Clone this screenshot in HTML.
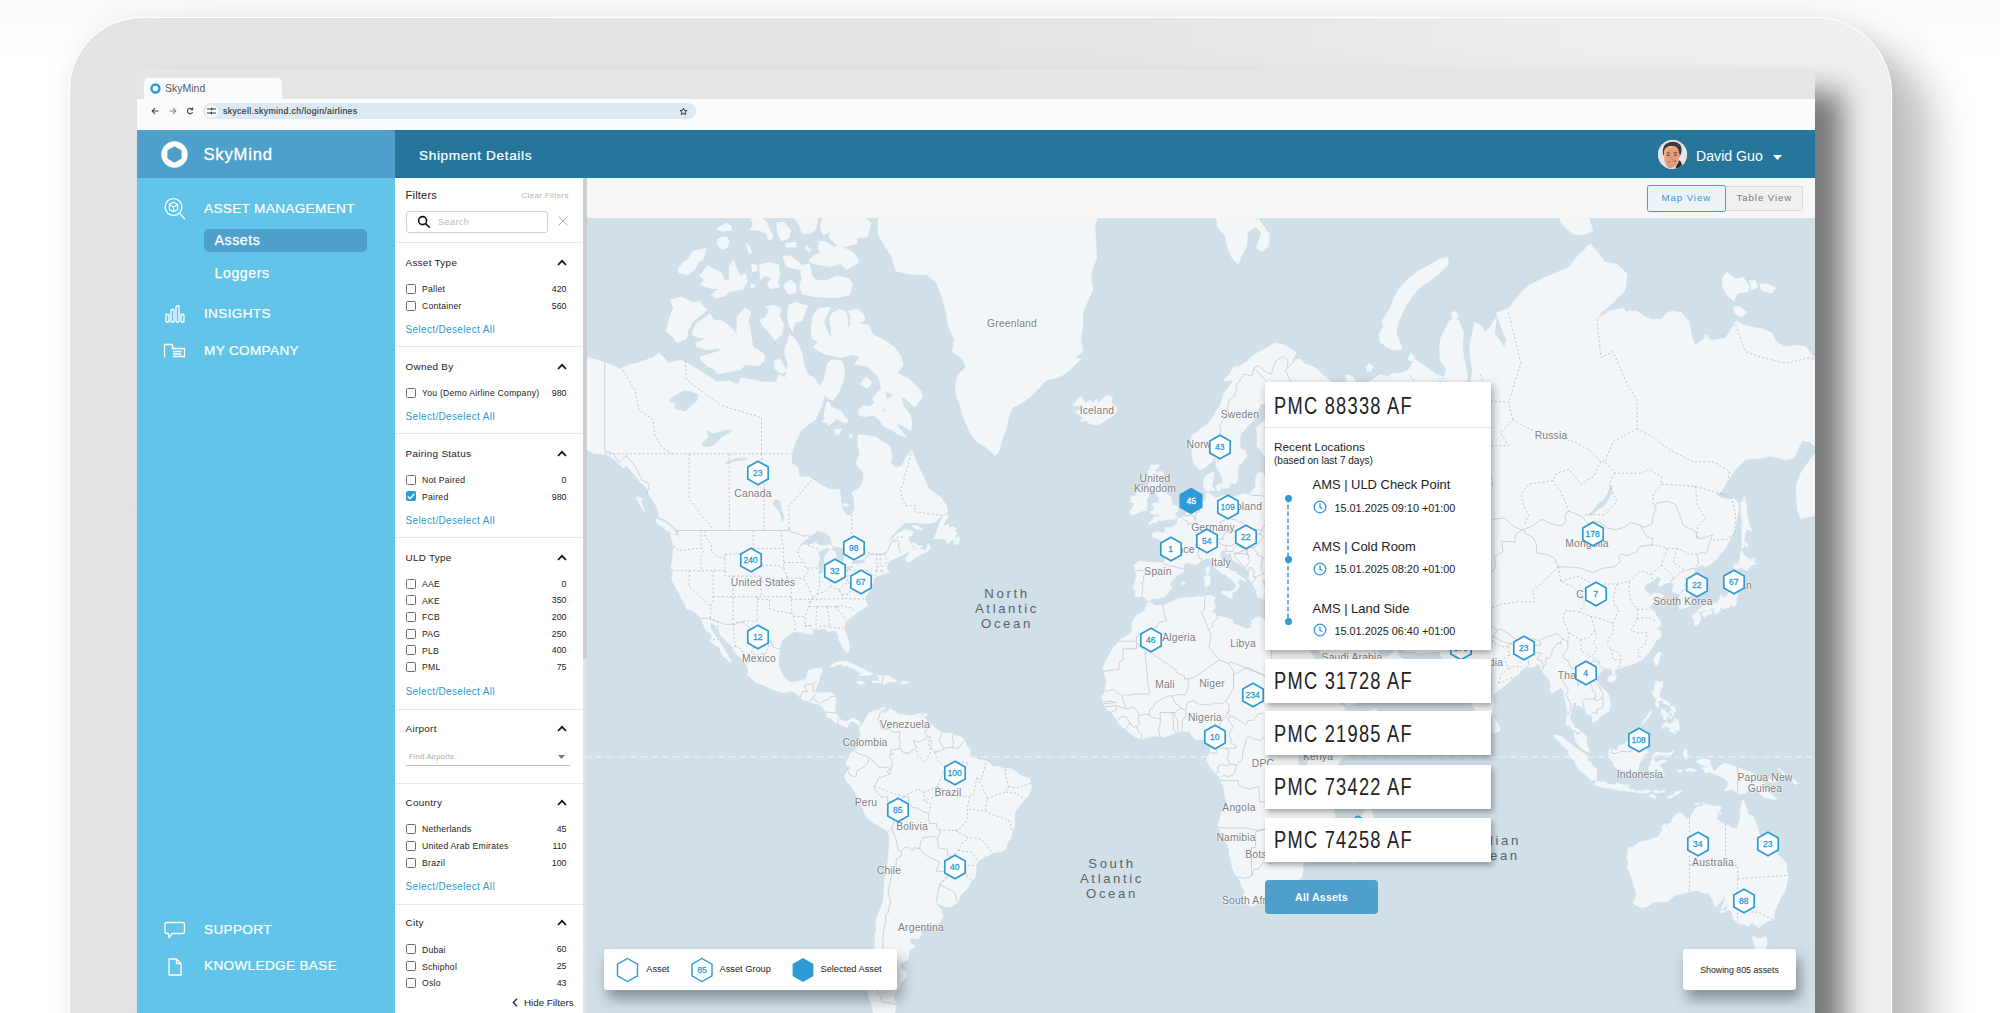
<!DOCTYPE html>
<html lang="en">
<head>
<meta charset="utf-8">
<title>SkyMind</title>
<style>
*{box-sizing:border-box;margin:0;padding:0}
html,body{width:2000px;height:1013px;overflow:hidden;background:#fff;font-family:"Liberation Sans",sans-serif;}
body{position:relative;background:linear-gradient(#fafafa 0,#fdfdfd 30px,#fff 60px)}
.abs{position:absolute}
#frame{position:absolute;left:70px;top:18px;width:1821px;height:1100px;border-radius:72px 76px 0 0;overflow:hidden;
 background:linear-gradient(90deg,#e3e3e3 0,#e4e4e4 55%,#eeeeee 85%,#efefef 100%);}
#frameshadow{position:absolute;left:70px;top:18px;width:1821px;height:1100px;border-radius:72px 76px 0 0;
 box-shadow:0 0 0 1.2px rgba(255,255,255,.95), 42px 30px 42px rgba(0,0,0,.24), 0 0 26px rgba(0,0,0,.08);}
#screen{position:absolute;left:67px;top:51px;width:1678px;height:1100px;background:#fff;
 box-shadow:27px 23px 27px rgba(0,0,0,.5);}
/* coordinates inside screen: subtract 137,69 */
#tabbar{position:absolute;left:0;top:0;width:1678px;height:30px;background:#e5e5e5}
#tab{position:absolute;left:7px;top:9px;width:138px;height:22px;background:#f9fbfd;border-radius:5px 5px 0 0}
#tab span{position:absolute;left:21px;top:4px;font-size:10.5px;color:#5a5a5a}
#toolbar{position:absolute;left:0;top:30px;width:1678px;height:31px;background:#f9fbfd}
#url{position:absolute;left:66px;top:4.3px;width:493px;height:16px;border-radius:8px;background:#dde9f2}
#url span{position:absolute;left:20px;top:2.5px;font-size:8.7px;color:#333;letter-spacing:.36px;-webkit-text-stroke:.15px #333}
#sidehead{position:absolute;left:0;top:61px;width:258px;height:48px;background:#4f9fcc}
#mainhead{position:absolute;left:258px;top:61px;width:1420px;height:48px;background:#26769b}
#sidebar{position:absolute;left:0;top:109px;width:258px;height:900px;background:#62c4e8}
#filters{position:absolute;left:258px;top:109px;width:188.6px;height:900px;background:#fff}
#maptb{position:absolute;left:448px;top:109px;width:1230px;height:40px;background:#f6f6f6}
#map{position:absolute;left:448px;top:149px;width:1230px;height:800px;background:#d1dfe8;overflow:hidden}
.w{color:#fff}
.nav{position:absolute;left:67px;font-size:13.6px;color:#fff;letter-spacing:.33px;white-space:nowrap;-webkit-text-stroke:.22px #fff}
.sub{position:absolute;left:77.5px;font-size:14.2px;color:#fff;letter-spacing:.55px;white-space:nowrap;-webkit-text-stroke:.25px #fff}
.fh{position:absolute;left:268.5px;font-size:9.9px;color:#222;letter-spacing:.3px;white-space:nowrap}
.fi{position:absolute;left:285px;font-size:8.65px;color:#222;letter-spacing:.25px;white-space:nowrap}
.fc{position:absolute;right:1248.5px;font-size:8.8px;color:#222;text-align:right;white-space:nowrap}
.cb{position:absolute;left:269px;width:10px;height:10px;border:1.2px solid #6b6b6b;border-radius:1.5px;background:#fff}
.sel{position:absolute;left:268.5px;font-size:10px;color:#2c9bd6;letter-spacing:.35px;white-space:nowrap}
.hr{position:absolute;left:258px;width:188px;height:1px;background:#e9e9e9}
.chev{position:absolute;left:420px;width:10px;height:7px}
.card{position:absolute;left:1128px;width:226px;background:#fff;box-shadow:2px 3px 6px rgba(0,0,0,.35)}
.ct{position:absolute;left:9px;font-size:24.5px;color:#222;white-space:nowrap;transform:scaleX(.745);transform-origin:0 50%;letter-spacing:1.7px}
.mk{position:absolute;width:28px;height:30px;margin:-15px 0 0 -14px}
.mk svg{position:absolute;left:0;top:0}
.mk span{position:absolute;left:0;top:10.2px;width:28px;text-align:center;font-size:8.5px;color:#2c9bd6;-webkit-text-stroke:.3px #2c9bd6}
.ml{position:absolute;font-size:10.3px;color:#7d7d7d;white-space:nowrap;transform:translate(-50%,-50%);letter-spacing:.2px;text-shadow:0 0 2px #fff,0 0 2px #fff}
.oc{position:absolute;font-size:13.2px;color:#5b6268;white-space:nowrap;transform:translate(-50%,-50%);letter-spacing:2.6px;text-align:center;line-height:15px}
</style>
</head>
<body>
<div id="frameshadow"></div>
<div id="frame">
<div id="screen">
 <div id="tabbar"><div id="tab">
  <svg class="abs" style="left:6px;top:5px" width="11" height="11" viewBox="0 0 11 11"><circle cx="5.5" cy="5.5" r="4" fill="#fff" stroke="#2a9bd8" stroke-width="2.4"/></svg>
  <span>SkyMind</span></div></div>
 <div id="toolbar">
  <svg class="abs" style="left:13px;top:7.3px" width="48" height="10" viewBox="0 0 48 10" fill="none" stroke="#444" stroke-width="1.1"><path d="M8.5 5H2.5M5 2.2L2.2 5L5 7.8"/><path d="M19.5 5h6M23 2.2L25.8 5L23 7.8" stroke="#888"/><path d="M42.2 3.2A2.7 2.7 0 1 0 42.6 6.2M42.6 1.6V3.6H40.6"/></svg>
  <div id="url"><div class="abs" style="left:1.5px;top:1.5px;width:13px;height:13px;border-radius:50%;background:#f9fbfd"></div><svg class="abs" style="left:4px;top:4px" width="9" height="8" viewBox="0 0 9 8" fill="none" stroke="#333" stroke-width="1.2"><path d="M0 2h3M6 2h3M0 6h3M6 6h3"/><circle cx="4.6" cy="2" r=".6"/><circle cx="4.4" cy="6" r=".6"/></svg>
  <span>skycell.skymind.ch/login/airlines</span>
  <svg class="abs" style="left:476px;top:3.5px" width="9" height="9" viewBox="0 0 24 24" fill="none" stroke="#333" stroke-width="2.6"><path d="M12 3l2.7 6 6.3.6-4.8 4.3 1.5 6.3L12 17l-5.7 3.2 1.5-6.3L3 9.600l6.300-.6z"/></svg>
  </div>
 </div>
 <div id="sidehead">
  <svg class="abs" style="left:24px;top:11px" width="27" height="27" viewBox="0 0 27 27"><circle cx="13.5" cy="13.500" r="13.200" fill="#fff"/><path d="M13.500 5.200L20.600 9.300V17.600L13.500 21.800L6.400 17.600V9.300Z" fill="#4f9fcc"/></svg>
  <div class="abs w" style="left:66.500px;top:14.500px;font-size:16.6px;letter-spacing:.8px;-webkit-text-stroke:.3px #fff">SkyMind</div>
 </div>
 <div id="mainhead">
  <div class="abs w" style="left:24px;top:17.500px;font-size:13.6px;letter-spacing:.65px;-webkit-text-stroke:.22px #fff">Shipment Details</div>
  <div class="abs" style="left:1263px;top:9.500px;width:29px;height:29px;border-radius:50%;overflow:hidden;background:#d9dde0">
   <svg width="29" height="29" viewBox="0 0 29 29"><rect width="29" height="29" fill="#e4e5e6"/><path d="M5 14Q3.500 4 12 2Q20 .8 23 6Q24.500 10 22.500 15L6 16Z" fill="#3b3b3d"/><path d="M6 12.500Q6.500 6.500 13 6Q20.500 5.500 21 12Q21.500 20 18.500 25Q15 29.500 10 27.500Q5.500 23 6 12.500Z" fill="#e39d7c"/><path d="M6 12.500Q6.500 6.500 13 6Q17 5.800 19 7.500Q13 7 10 9.500Q7.500 11.500 7.500 15Q6.500 20 8 24Q5.700 19 6 12.500Z" fill="#f0b190"/><path d="M18.800 25Q20.500 23 21 20L23 22L25 28L17 29Z" fill="#2c2d31"/><ellipse cx="21.300" cy="15.500" rx="1" ry="2" fill="#d88f70"/><path d="M8.500 13.300Q10.200 12.300 12 13.200M15.500 13Q17.300 12 19.200 13" stroke="#5a3b2e" stroke-width=".9" fill="none"/><path d="M9 15.300h2.500M16.200 15h2.500" stroke="#3a2a24" stroke-width="1.100"/><path d="M10.500 21.500Q14 24 17.800 21" stroke="#8a4a3a" stroke-width="1.200" fill="none"/><path d="M11.500 22.300Q14 23.500 16.800 22" stroke="#fff" stroke-width=".7" fill="none"/><path d="M13.200 15.500Q12.500 18.500 13.500 19.300L15 19.200" stroke="#c27f63" stroke-width=".7" fill="none"/></svg>
  </div>
  <div class="abs w" style="left:1301px;top:17.8px;font-size:14.15px">David Guo</div>
  <svg class="abs" style="left:1378px;top:25.300px" width="9" height="5" viewBox="0 0 9 5"><path d="M0 0h9L4.500 5z" fill="#fff"/></svg>
 </div>
 <div id="sidebar"><svg class="abs" style="left:26px;top:18px" width="24" height="26" viewBox="0 0 24 26" fill="none" stroke="#fff" stroke-width="1.3"><circle cx="10.5" cy="11" r="8.4"/><path d="M16.6 17.4L22 23.2"/><path d="M10.5 6.2L14.7 8.6V13.4L10.5 15.8L6.3 13.4V8.600ZM6.300 8.600L10.500 11L14.700 8.600M10.500 11V15.800" stroke-width="1.1" stroke-linejoin="round"/></svg>
<div class="nav" style="top:23px">ASSET MANAGEMENT</div>
<div class="abs" style="left:67px;top:50.500px;width:163px;height:23px;border-radius:5px;background:#4f9fcc"></div>
<div class="sub" style="top:53.500px">Assets</div>
<div class="sub" style="top:87px">Loggers</div>
<svg class="abs" style="left:27px;top:126px" width="22" height="20" viewBox="0 0 22 20" fill="none" stroke="#fff" stroke-width="1.300"><rect x="2" y="10.500" width="3" height="7.500" rx=".8"/><rect x="7" y="5.500" width="3" height="12.500" rx=".8"/><rect x="12" y="2" width="3" height="16" rx=".8"/><rect x="17" y="10.500" width="3" height="7.500" rx=".8"/></svg>
<div class="nav" style="top:127.500px">INSIGHTS</div>
<svg class="abs" style="left:26px;top:164px" width="24" height="18" viewBox="0 0 24 18" fill="none" stroke="#fff" stroke-width="1.300"><path d="M1.500 15.500V2.500H9.500V6.500H21.500V15.500M10 9.500H18.500M10 12H18.500M10 14.500H21.500"/></svg>
<div class="nav" style="top:164.500px">MY COMPANY</div>
<svg class="abs" style="left:26px;top:741.6px" width="24" height="20" viewBox="0 0 24 20" fill="none" stroke="#fff" stroke-width="1.300" stroke-linejoin="round"><path d="M4 2.500H19.500Q21.500 2.500 21.500 4.500V11.500Q21.500 13.500 19.500 13.500H9L6 17.500L5.500 13.500H4Q2 13.500 2 11.500V4.500Q2 2.500 4 2.500Z"/></svg>
<div class="nav" style="top:744px">SUPPORT</div>
<svg class="abs" style="left:30px;top:778.6px" width="16" height="20" viewBox="0 0 16 20" fill="none" stroke="#fff" stroke-width="1.300" stroke-linejoin="round"><path d="M2 2H9.500L14 6.500V18H2ZM9.500 2V6.500H14"/></svg>
<div class="nav" style="top:780px">KNOWLEDGE BASE</div></div>
 <div id="filters"></div>
 <div class="abs" style="left:268.500px;top:120px;font-size:11.1px;color:#222;letter-spacing:.2px">Filters</div>
<div class="abs" style="left:384.500px;top:121.5px;font-size:7.95px;color:#b5b5b5;letter-spacing:.35px;white-space:nowrap">Clear Filters</div>
<div class="abs" style="left:269px;top:142px;width:142px;height:22px;border:1px solid #cfcfcf;border-radius:3px"></div>
<svg class="abs" style="left:280px;top:146px" width="14" height="14" viewBox="0 0 14 14" fill="none" stroke="#111" stroke-width="1.600"><circle cx="5.600" cy="5.600" r="4"/><path d="M8.600 8.600L12.800 12.800"/></svg>
<div class="abs" style="left:301px;top:147.5px;font-size:9.3px;color:#bbb;letter-spacing:.3px">Search</div>
<svg class="abs" style="left:420.500px;top:147px" width="10" height="10" viewBox="0 0 10 10" stroke="#aaa" stroke-width="1"><path d="M.5.500L9.500 9.500M9.500.500L.500 9.500"/></svg>
<div class="hr" style="top:172.5px"></div>
<div class="fh" style="top:187.5px">Asset Type</div>
<svg class="chev" style="top:189.5px" viewBox="0 0 10 7" fill="none" stroke="#111" stroke-width="1.700"><path d="M1 6L5 1.800L9 6"/></svg>
<div class="cb" style="top:214.5px"></div>
<div class="fi" style="top:214.9px">Pallet</div>
<div class="fc" style="top:214.5px">420</div>
<div class="cb" style="top:231.5px"></div>
<div class="fi" style="top:231.9px">Container</div>
<div class="fc" style="top:231.5px">560</div>
<div class="sel" style="top:254.5px">Select/Deselect All</div>
<div class="hr" style="top:276.5px"></div>
<div class="fh" style="top:291.5px">Owned By</div>
<svg class="chev" style="top:293.5px" viewBox="0 0 10 7" fill="none" stroke="#111" stroke-width="1.700"><path d="M1 6L5 1.800L9 6"/></svg>
<div class="cb" style="top:318.5px"></div>
<div class="fi" style="top:318.9px">You (Demo Airline Company)</div>
<div class="fc" style="top:318.5px">980</div>
<div class="sel" style="top:341.5px">Select/Deselect All</div>
<div class="hr" style="top:363.5px"></div>
<div class="fh" style="top:378.5px">Pairing Status</div>
<svg class="chev" style="top:380.5px" viewBox="0 0 10 7" fill="none" stroke="#111" stroke-width="1.700"><path d="M1 6L5 1.800L9 6"/></svg>
<div class="cb" style="top:406.0px"></div>
<div class="fi" style="top:406.4px">Not Paired</div>
<div class="fc" style="top:406.0px">0</div>
<div class="cb" style="top:422px;background:#2f9bd8;border-color:#2f9bd8"></div><svg class="abs" style="left:270px;top:423.5px" width="8" height="7" viewBox="0 0 8 7" fill="none" stroke="#fff" stroke-width="1.400"><path d="M.8 3.600L3 5.800L7.300 1"/></svg>
<div class="fi" style="top:422.9px">Paired</div>
<div class="fc" style="top:422.5px">980</div>
<div class="sel" style="top:445.5px">Select/Deselect All</div>
<div class="hr" style="top:468px"></div>
<div class="fh" style="top:482.5px">ULD Type</div>
<svg class="chev" style="top:484.5px" viewBox="0 0 10 7" fill="none" stroke="#111" stroke-width="1.700"><path d="M1 6L5 1.800L9 6"/></svg>
<div class="cb" style="top:509.5px"></div>
<div class="fi" style="top:509.9px">AAE</div>
<div class="fc" style="top:509.5px">0</div>
<div class="cb" style="top:526.2px"></div>
<div class="fi" style="top:526.6px">AKE</div>
<div class="fc" style="top:526.2px">350</div>
<div class="cb" style="top:542.9px"></div>
<div class="fi" style="top:543.3px">FCB</div>
<div class="fc" style="top:542.9px">200</div>
<div class="cb" style="top:559.6px"></div>
<div class="fi" style="top:560.0px">PAG</div>
<div class="fc" style="top:559.6px">250</div>
<div class="cb" style="top:576.3px"></div>
<div class="fi" style="top:576.6999999999999px">PLB</div>
<div class="fc" style="top:576.3px">400</div>
<div class="cb" style="top:593.0px"></div>
<div class="fi" style="top:593.4px">PML</div>
<div class="fc" style="top:593.0px">75</div>
<div class="sel" style="top:616.5px">Select/Deselect All</div>
<div class="hr" style="top:639.5px"></div>
<div class="fh" style="top:653.5px">Airport</div>
<svg class="chev" style="top:655.5px" viewBox="0 0 10 7" fill="none" stroke="#111" stroke-width="1.700"><path d="M1 6L5 1.800L9 6"/></svg>
<div class="abs" style="left:272px;top:683px;font-size:7.600px;color:#aaa;letter-spacing:.2px">Find Airports</div>
<svg class="abs" style="left:420.500px;top:686px" width="7" height="4" viewBox="0 0 7 4"><path d="M0 0h7L3.500 4z" fill="#777"/></svg>
<div class="abs" style="left:269px;top:695.5px;width:164px;height:1px;background:#bdbdbd"></div>
<div class="hr" style="top:713.5px"></div>
<div class="fh" style="top:727.5px">Country</div>
<svg class="chev" style="top:729.5px" viewBox="0 0 10 7" fill="none" stroke="#111" stroke-width="1.700"><path d="M1 6L5 1.800L9 6"/></svg>
<div class="cb" style="top:755.0px"></div>
<div class="fi" style="top:755.4px">Netherlands</div>
<div class="fc" style="top:755.0px">45</div>
<div class="cb" style="top:771.8px"></div>
<div class="fi" style="top:772.1999999999999px">United Arab Emirates</div>
<div class="fc" style="top:771.8px">110</div>
<div class="cb" style="top:788.7px"></div>
<div class="fi" style="top:789.1px">Brazil</div>
<div class="fc" style="top:788.7px">100</div>
<div class="sel" style="top:811.5px">Select/Deselect All</div>
<div class="hr" style="top:834.5px"></div>
<div class="fh" style="top:848px">City</div>
<svg class="chev" style="top:850px" viewBox="0 0 10 7" fill="none" stroke="#111" stroke-width="1.700"><path d="M1 6L5 1.800L9 6"/></svg>
<div class="cb" style="top:875.4px"></div>
<div class="fi" style="top:875.8px">Dubai</div>
<div class="fc" style="top:875.4px">60</div>
<div class="cb" style="top:892.1px"></div>
<div class="fi" style="top:892.5px">Schiphol</div>
<div class="fc" style="top:892.1px">25</div>
<div class="cb" style="top:908.8px"></div>
<div class="fi" style="top:909.1999999999999px">Oslo</div>
<div class="fc" style="top:908.8px">43</div>
<svg class="abs" style="left:374.500px;top:929px" width="6" height="9" viewBox="0 0 6 9" fill="none" stroke="#222" stroke-width="1.300"><path d="M5 .8L1.300 4.500L5 8.200"/></svg>
<div class="abs" style="left:387px;top:927.5px;font-size:9.8px;color:#222;white-space:nowrap">Hide Filters</div>
<div class="abs" style="left:445.6px;top:109px;width:3.2px;height:900px;background:#e2e5e8;z-index:2"></div>
<div class="abs" style="left:445.7px;top:109px;width:4.1px;height:481px;background:#cecece;z-index:3"></div>
 <div id="maptb">
  <div class="abs" style="left:1139px;top:7.5px;width:79px;height:25px;border:1px solid #d9d9d9;border-left:none;border-radius:0 2px 2px 0;background:#f0f0f0"></div>
  <div class="abs" style="left:1062px;top:6.5px;width:78.5px;height:27px;border:1.5px solid #3f9fd6;border-radius:2.5px;background:#ebf3f9"></div>
  <div class="abs" style="left:1076.5px;top:14px;font-size:9.6px;color:#3498d3;letter-spacing:.95px;white-space:nowrap">Map View</div>
  <div class="abs" style="left:1151.5px;top:14px;font-size:9.6px;color:#777;letter-spacing:.95px;white-space:nowrap">Table View</div>
 </div>
 <div id="map"><svg class="abs" style="left:0;top:0" width="1230" height="800" viewBox="0 0 1230 800"><path d="M-16.4 133.6L3.7 139.5L19.8 144.2L35.9 151.0L43.9 146.5L51.9 145.3L68.0 139.5L74.0 134.8L84.1 145.3L96.1 141.8L112.2 151.0L124.2 158.7L132.3 164.1L144.3 163.0L152.4 167.3L156.4 159.8L168.4 161.9L178.5 164.1L190.5 164.1L194.5 156.5L200.6 159.8L202.6 145.3L199.4 133.6L204.6 116.1L210.6 121.2L216.6 133.6L218.6 145.3L222.7 156.5L228.7 159.8L234.7 168.3L238.7 161.9L242.7 145.3L246.8 141.8L256.8 143.0L259.6 151.0L258.8 161.9L254.8 172.4L250.8 179.5L246.8 182.5L239.5 177.5L236.7 187.4L232.7 196.0L230.7 201.5L222.7 207.0L216.2 212.3L210.6 223.5L206.6 235.8L206.6 245.3L212.6 249.2L214.6 258.9L224.7 258.9L234.7 266.2L244.8 271.2L254.8 271.9L256.0 283.6L256.8 290.3L262.0 298.1L266.8 296.8L269.7 290.3L268.9 280.2L266.8 274.7L274.9 269.8L278.1 262.6L278.5 255.2L270.9 245.3L274.9 235.8L272.9 227.7L272.9 216.7L282.9 217.5L291.0 219.3L297.0 223.5L305.0 227.7L307.0 239.8L305.0 245.3L311.0 249.9L317.1 247.6L321.9 237.4L327.1 232.6L331.1 243.8L335.1 251.4L339.2 260.4L343.2 269.8L349.2 274.7L355.2 278.8L361.2 287.0L362.5 293.6L357.2 297.5L349.2 304.5L339.2 305.7L329.1 304.5L319.1 305.1L313.0 311.3L307.0 317.4L301.8 324.5L307.0 321.0L313.0 315.0L321.1 311.3L327.5 313.1L327.1 317.4L323.1 319.2L325.1 324.5L327.1 328.6L331.1 330.4L337.1 331.5L341.2 332.7L343.2 325.1L346.0 330.4L341.2 334.4L333.1 337.8L327.1 342.3L321.9 344.5L320.3 340.1L325.1 335.0L327.1 332.7L321.1 335.0L317.1 337.2L311.0 340.1L305.0 342.9L302.2 347.3L301.8 351.1L305.0 353.8L301.0 355.4L295.0 357.0L288.9 360.2L288.5 364.4L285.7 368.6L282.9 366.0L284.5 371.2L281.7 377.8L280.1 378.8L280.9 383.8L282.9 387.7L278.5 390.2L273.3 393.6L268.9 397.0L264.8 400.3L260.8 404.1L259.2 410.2L260.8 415.8L262.8 420.4L264.4 427.2L264.0 433.0L261.6 434.8L258.8 431.2L256.8 427.2L254.0 422.6L254.0 418.1L250.8 413.5L248.0 412.5L243.5 413.9L239.5 410.7L234.7 411.2L230.7 411.2L227.5 411.6L227.9 416.2L222.7 416.2L217.4 414.4L210.6 413.5L205.8 415.3L201.4 419.0L196.6 422.6L195.3 428.5L194.5 435.2L193.3 441.8L193.3 447.1L195.7 452.7L199.0 459.1L202.6 462.5L206.6 464.6L210.6 463.8L216.6 462.5L220.7 461.2L222.3 457.0L223.1 452.7L226.7 451.4L232.7 450.1L236.7 450.5L237.5 453.5L234.7 457.8L233.9 463.3L231.9 467.6L229.5 473.9L232.7 474.7L238.7 474.7L244.8 474.3L250.8 477.2L250.8 484.3L250.0 490.4L250.0 494.5L252.8 498.6L256.0 501.9L260.8 503.5L264.8 501.9L266.8 500.2L270.9 501.1L275.7 504.3L274.5 509.2L272.1 505.5L266.8 502.7L263.6 505.5L262.8 509.6L258.8 508.0L253.6 505.5L250.4 504.7L246.0 500.2L241.9 498.6L241.5 494.5L237.5 489.6L234.3 486.3L229.5 485.5L223.9 483.4L218.6 482.2L214.6 478.9L208.6 473.4L203.8 473.4L198.6 475.1L190.5 472.6L184.9 470.1L177.7 466.7L170.4 464.2L166.4 460.4L162.4 457.0L163.2 452.7L162.4 448.4L158.8 443.1L153.2 437.4L148.3 433.0L146.3 427.6L142.3 424.0L136.3 418.1L133.1 412.5L130.3 406.9L125.0 404.1L125.9 411.2L129.9 417.2L133.1 421.7L136.3 426.3L139.1 430.8L141.5 435.2L143.5 438.7L146.3 443.1L144.3 444.4L142.3 440.9L137.1 437.4L135.5 433.0L134.3 429.4L130.3 427.2L126.3 424.0L124.2 422.6L127.5 420.4L125.5 415.8L121.4 412.5L119.0 407.9L117.0 403.2L115.4 399.8L110.6 394.6L106.2 392.1L101.7 391.2L100.1 386.3L96.5 380.8L94.1 375.2L92.1 372.2L88.9 366.0L86.5 361.3L87.7 355.4L86.1 348.4L87.7 338.9L88.5 329.2L87.3 323.4L85.3 316.2L92.1 317.4L94.5 321.6L94.1 313.7L91.3 310.7L86.1 306.3L80.1 301.3L74.0 298.7L72.8 291.6L68.8 283.6L64.0 276.8L62.0 269.8L57.2 266.2L53.9 262.6L47.9 255.2L41.9 247.6L37.9 249.9L31.9 243.8L24.6 237.4L15.8 235.8L7.8 235.0L-0.3 230.2L-16.4 230.2Z M409.9 237.4L401.4 229.3L391.4 223.5L385.4 214.9L381.3 206.1L378.5 199.7L375.3 187.4L371.3 177.5L370.5 167.3L373.3 156.5L381.3 148.7L377.3 140.7L367.3 133.6L369.3 121.2L363.3 108.2L361.2 94.5L357.2 79.9L351.2 64.4L341.2 56.2L325.1 56.2L311.0 52.9L307.0 39.0L301.0 29.9L293.0 16.5L293.0 -10.5L513.9 -10.5L509.9 10.5L511.9 39.0L505.9 56.2L507.9 72.2L503.9 79.9L497.8 94.5L497.8 108.2L495.8 121.2L497.8 133.6L489.8 139.5L495.8 140.7L485.8 151.0L475.7 158.7L461.7 161.9L451.6 172.4L443.6 180.5L435.6 185.5L427.5 189.3L423.5 199.7L421.5 210.6L417.5 219.3L415.5 227.7L413.5 234.2Z M275.7 503.9L277.7 506.8L279.7 502.7L282.5 496.6L285.7 494.1L288.1 493.3L293.0 492.5L296.2 490.4L299.8 488.8L299.8 491.7L297.8 494.5L298.6 495.3L301.0 494.5L304.2 492.5L305.0 489.6L306.6 492.5L311.0 493.7L312.2 496.2L317.5 496.2L323.1 497.8L327.1 497.8L333.1 495.8L337.5 495.8L335.1 497.8L341.2 500.7L342.0 504.7L346.0 505.5L351.2 510.8L357.2 515.3L364.5 515.3L369.3 516.1L376.1 519.3L379.3 521.7L381.3 526.9L385.4 531.8L385.4 537.0L383.3 539.0L387.4 539.8L391.8 540.2L393.4 541.8L397.4 541.8L403.4 544.2L408.2 549.0L413.5 548.6L419.5 550.7L425.5 550.3L431.5 553.9L436.4 557.9L441.6 559.5L444.4 559.9L445.6 565.2L446.4 568.0L446.0 571.7L443.6 577.3L439.6 581.4L436.8 584.7L433.6 589.6L431.5 591.7L429.5 595.8L429.5 602.0L429.5 608.3L427.5 612.5L426.3 618.9L424.3 622.3L421.5 627.5L421.5 629.6L417.5 633.6L412.7 634.0L407.4 634.9L403.4 637.5L399.8 638.4L394.2 642.8L391.4 646.3L391.0 650.8L391.0 655.4L390.2 659.0L386.2 663.1L383.3 669.2L379.3 673.9L376.5 676.2L373.3 682.0L371.3 685.4L365.7 689.0L360.4 688.8L355.2 686.4L351.6 684.4L352.0 687.3L356.4 691.7L356.4 695.7L358.4 696.7L355.2 704.3L349.2 707.9L341.2 709.4L336.3 708.4L336.3 717.3L333.1 720.4L325.1 719.9L325.1 725.3L330.3 728.0L327.1 730.7L323.9 732.4L323.9 739.1L322.3 741.9L315.1 744.7L315.1 750.5L321.9 754.6L321.5 758.2L315.1 765.5L314.2 770.4L311.0 773.5L309.0 778.0L309.0 781.8L311.4 786.4L309.0 797.8L288.9 797.8L286.9 787.7L283.7 778.0L282.9 768.6L282.9 759.4L282.9 752.3L286.9 747.6L287.7 741.9L288.9 736.3L289.7 730.7L290.1 724.2L289.7 717.3L291.4 712.0L290.5 703.3L292.2 699.2L295.0 691.7L297.8 684.4L298.6 679.6L299.0 672.5L299.4 665.5L299.8 658.5L301.4 651.7L302.6 645.0L303.4 636.6L304.2 629.6L304.4 621.9L303.8 614.7L299.8 610.9L295.0 608.3L288.9 605.0L284.1 601.2L279.7 595.8L277.7 590.4L276.1 587.6L273.7 582.7L270.9 576.1L268.5 571.7L265.2 566.8L261.6 563.2L260.0 559.1L259.6 557.1L262.8 553.1L264.8 551.1L265.2 548.2L261.2 548.2L261.6 543.0L264.4 539.0L264.8 535.8L269.3 533.0L271.7 529.0L274.9 528.1L276.1 523.7L274.9 518.9L275.3 514.8L274.9 511.6L273.3 510.0Z M245.0 449.0L248.8 445.3L252.8 444.0L255.4 443.3L260.0 443.3L264.8 444.2L268.9 446.6L273.3 448.6L276.1 450.1L280.9 452.0L282.1 453.1L285.7 454.8L288.3 456.1L284.9 457.4L281.7 457.1L274.1 457.6L276.5 455.5L273.3 454.0L270.9 451.8L267.7 450.3L264.8 449.7L263.0 448.1L260.0 447.9L256.4 446.8L255.6 445.4L251.2 447.5L249.2 448.4Z M287.1 464.0L287.3 462.7L289.7 463.1L293.8 463.6L295.6 463.1L293.8 461.2L294.2 459.3L291.4 457.8L293.8 457.2L296.2 458.0L298.4 457.6L302.2 457.8L305.4 458.5L306.6 459.9L308.4 459.9L306.6 460.9L310.2 461.4L311.6 462.9L310.4 464.6L305.4 463.6L302.8 464.6L300.6 464.6L299.4 467.1L298.0 465.2L294.8 464.6L289.9 464.6L287.3 464.2Z M271.5 464.4L273.3 463.3L277.3 463.8L279.9 464.8L280.1 465.9L277.7 465.7L276.1 466.5L273.7 466.0L272.1 464.6Z M316.3 463.3L322.7 463.8L322.3 465.5L316.3 465.7Z M337.5 498.4L339.2 495.8L341.6 495.3L341.2 498.2Z M348.0 321.0L351.2 315.6L352.4 311.3L354.8 305.1L356.0 301.9L358.4 298.1L363.3 296.2L362.5 300.0L360.4 302.6L358.0 308.2L361.2 307.0L363.3 306.3L364.1 310.1L368.1 308.8L371.3 311.0L369.7 314.4L372.9 314.4L370.1 318.0L370.9 321.0L373.7 317.7L374.7 321.3L373.1 326.6L370.9 326.6L370.9 323.4L368.5 325.5L369.5 321.0L365.7 322.8L363.7 325.1L361.4 325.1L362.1 321.9L358.0 321.0L352.0 320.7Z M70.4 301.6L74.0 301.6L82.9 306.3L87.3 310.7L88.5 311.6L90.5 315.9L86.5 315.6L83.3 313.4L80.5 311.6L77.2 308.8L72.4 305.7Z M51.9 278.8L57.2 280.2L56.4 285.0L58.8 290.9L60.0 293.6L56.0 289.0L53.5 284.3L51.5 280.9Z M327.1 307.3L333.1 307.9L338.4 311.9L335.1 311.9L329.5 310.4Z M327.5 325.1L329.1 324.2L333.1 328.1L337.1 327.8L335.1 330.4L331.1 329.5L327.5 326.9Z M274.9 166.2L280.9 158.7L286.9 164.1L282.9 170.4Z M256.8 286.3L260.8 285.6L264.8 287.6L259.6 288.6Z M562.5 384.8L564.9 384.3L570.1 387.7L574.1 387.2L578.2 388.2L582.2 385.3L586.2 383.8L592.2 381.3L598.3 379.8L606.3 379.8L612.3 378.8L617.5 378.8L622.4 377.8L625.6 377.3L627.6 378.8L630.4 378.8L628.8 381.8L628.8 384.8L630.4 387.7L629.6 390.2L626.4 393.6L629.6 395.5L631.2 397.5L636.4 398.9L639.2 398.9L644.4 400.8L647.3 401.8L648.5 405.5L652.5 406.9L658.5 409.8L662.5 411.2L666.5 408.8L666.5 405.5L666.5 402.7L670.6 399.4L674.6 398.9L679.4 401.8L682.6 403.2L687.4 405.1L694.7 406.5L702.7 408.4L706.7 406.5L710.7 405.1L715.9 406.5L718.8 407.4L723.6 406.5L726.4 414.9L723.6 422.6L720.8 420.4L717.2 413.0L717.2 417.2L719.6 421.7L722.0 425.4L724.4 430.8L726.8 436.1L728.8 439.6L729.2 444.0L734.0 448.4L735.6 452.7L735.6 458.7L736.8 462.9L740.9 465.5L743.7 473.9L746.9 478.0L750.9 481.4L756.1 486.3L759.7 488.4L758.9 492.1L760.9 493.3L765.0 496.6L771.0 495.3L777.0 493.7L783.0 493.3L789.1 491.3L791.9 490.8L791.5 496.6L789.5 502.7L786.2 506.8L783.0 512.8L779.0 518.9L775.0 524.9L768.2 531.0L762.9 535.0L756.9 540.6L752.9 546.2L747.7 551.1L745.7 555.1L743.7 559.1L742.1 564.0L744.1 566.4L744.9 571.2L744.9 575.3L747.7 580.6L748.9 585.5L748.9 591.7L750.1 597.9L749.7 600.0L746.9 605.0L740.9 609.2L734.8 612.1L730.8 616.4L726.8 620.2L726.0 624.5L728.0 629.6L728.8 634.0L728.8 638.4L726.0 641.9L720.8 643.7L717.2 647.2L718.4 651.7L716.8 658.5L711.1 665.0L707.5 671.1L700.7 678.2L694.7 682.5L689.4 684.4L682.6 684.9L675.4 684.9L666.5 688.3L662.1 685.9L660.1 685.9L660.1 683.9L658.5 678.6L659.7 673.9L656.5 667.8L654.1 660.8L652.1 659.0L649.3 654.0L647.3 649.9L646.1 642.8L644.4 636.2L644.4 632.3L641.6 625.3L638.4 618.9L635.2 612.5L633.6 609.2L633.6 604.1L635.2 600.4L636.4 593.7L640.0 589.6L641.6 583.5L639.6 577.3L639.2 574.5L639.2 571.2L637.6 567.2L635.6 563.6L635.2 561.1L633.6 558.3L630.4 555.1L626.4 551.1L624.4 547.8L621.5 541.8L623.6 537.4L624.8 535.0L625.6 531.0L625.6 526.9L625.2 522.9L622.0 520.9L619.5 520.9L614.3 521.3L610.3 521.7L606.3 516.9L604.3 513.6L599.9 513.2L595.8 513.4L591.0 514.4L586.2 516.5L579.4 519.3L574.1 518.5L570.1 517.7L562.1 519.3L556.1 521.3L550.0 518.9L542.8 513.6L538.0 509.6L533.2 504.7L531.2 500.7L528.0 496.6L525.1 493.7L519.9 489.2L518.7 484.7L517.9 481.4L515.9 479.3L519.9 473.9L520.7 467.6L521.9 465.0L520.7 459.1L517.9 453.1L517.9 449.2L521.9 440.9L528.0 430.3L533.2 424.0L534.4 422.2L542.0 418.1L546.0 414.4L547.2 410.7L546.8 405.5L549.2 400.8L552.1 397.0L555.7 395.5L558.9 393.6L561.3 388.7Z M784.2 587.6L787.1 593.7L789.1 602.0L786.2 604.1L785.0 610.4L783.0 618.9L780.2 627.5L778.2 634.0L775.4 642.3L769.0 645.0L762.9 642.8L761.7 635.7L760.1 629.6L762.1 623.2L764.2 616.8L762.9 610.4L765.0 605.0L772.2 602.9L777.0 599.1L779.0 593.7L782.2 589.6Z M495.0 203.4L498.2 200.2L497.0 198.8L489.8 193.2L497.8 192.2L496.6 187.9L487.8 187.4L493.0 180.5L496.2 178.0L500.6 185.5L504.7 181.5L507.9 185.0L511.9 181.0L513.5 185.5L515.9 182.5L521.1 177.5L527.6 179.0L525.9 184.5L531.6 189.3L532.0 192.2L528.0 197.9L525.1 199.2L519.9 202.9L513.9 206.5L509.9 207.0L504.7 205.6L501.0 202.9Z M563.3 306.0L566.1 303.2L568.1 301.3L569.3 298.7L574.1 298.7L575.4 296.8L573.3 297.1L570.1 296.5L565.7 295.5L564.9 294.2L567.3 292.9L569.7 290.3L569.7 287.6L567.1 288.3L568.5 286.0L567.7 285.0L569.7 285.0L573.7 284.6L574.1 283.9L574.1 280.9L574.8 279.5L573.3 279.5L571.7 276.8L572.5 274.0L574.1 273.6L571.7 274.3L568.5 275.4L565.7 275.7L565.7 273.3L567.5 270.1L566.5 266.6L563.7 271.2L563.3 266.9L564.1 263.3L561.3 261.1L563.3 256.7L562.9 252.6L565.5 252.2L564.9 249.5L566.1 246.7L570.1 247.2L573.9 246.5L573.7 248.4L570.1 252.2L569.3 255.2L572.9 253.7L578.2 253.7L579.0 255.2L577.8 257.8L576.4 261.1L575.0 263.7L572.9 266.2L575.8 265.8L578.2 267.8L579.8 270.5L580.6 273.3L581.4 275.7L583.8 276.8L585.8 279.5L586.6 282.9L585.0 282.3L587.6 286.0L586.6 287.6L588.2 287.2L591.4 287.4L593.2 290.3L592.6 292.9L591.4 294.2L589.8 296.8L588.6 296.8L591.8 297.6L591.6 299.2L590.0 300.5L587.2 301.6L585.6 301.2L581.8 301.3L578.6 302.6L576.4 302.9L574.1 301.9L572.1 302.9L571.5 305.0L569.5 304.0L565.9 305.4L565.3 306.6Z M562.1 292.3L560.5 292.5L558.1 292.6L552.9 294.9L548.0 297.1L546.8 297.1L545.2 294.5L544.2 292.9L546.4 291.9L547.2 290.0L548.4 287.0L549.8 285.2L546.0 284.3L545.2 284.3L546.4 281.6L545.6 280.2L546.4 278.2L549.2 278.2L552.1 278.2L551.3 275.7L552.9 272.2L556.5 270.6L558.5 272.1L561.3 271.7L563.3 274.7L564.3 277.5L562.1 279.9L561.3 282.9L561.7 284.6L562.1 287.3L561.3 290.3Z M636.2 374.7L637.2 373.0L639.8 373.0L643.6 373.7L648.7 372.2L647.7 374.7L646.9 376.3L647.7 378.5L646.9 380.4L644.0 379.8L640.8 377.3L636.8 375.8Z M619.1 358.6L619.9 358.9L623.2 356.8L624.6 358.4L625.6 360.7L625.2 363.9L624.8 367.5L622.8 367.5L622.0 369.1L619.9 368.6L619.9 363.9L619.9 361.8L618.9 360.2Z M624.0 347.3L624.6 352.2L623.6 356.0L621.5 354.9L620.7 353.3L620.7 350.6L621.3 349.6L623.6 348.9Z M595.8 365.5L598.7 363.6L600.1 364.9L598.7 367.0L597.0 366.3Z M630.8 268.3L633.6 266.6L636.4 265.5L636.8 269.1L635.2 271.9L634.4 273.6L631.6 271.9Z M625.6 269.8L628.0 269.1L629.6 271.2L628.8 272.9L626.4 272.6Z M680.6 386.3L683.4 386.0L687.8 386.8L691.8 387.5L691.4 388.5L685.8 389.0L681.0 387.5Z M715.9 388.5L718.8 387.0L725.2 385.5L722.8 388.7L718.8 390.7L716.4 389.9Z M653.3 46.9L646.5 39.0L642.4 29.9L640.4 18.5L632.4 8.5L630.4 -10.5L670.6 -10.5L670.6 8.5L662.5 14.5L661.7 28.0L655.7 39.0Z M671.4 29.9L676.6 14.5L669.8 8.5L672.6 0.2L684.6 16.5L683.8 28.0L677.4 33.6Z M809.1 132.4L801.1 128.7L795.1 123.7L793.9 116.1L798.3 109.5L797.1 102.8L801.1 97.3L805.1 90.2L809.1 79.9L813.2 72.2L821.2 62.7L831.2 54.5L843.3 47.7L855.3 40.8L862.6 39.0L863.4 46.0L855.3 54.5L847.3 61.1L835.3 69.1L827.2 78.4L821.2 87.3L817.2 95.9L813.2 104.2L811.2 114.8L815.2 125.0L817.2 131.1Z M781.0 148.7L784.2 145.3L787.9 148.7L786.2 153.2L782.2 153.2Z M823.2 140.7L825.6 134.8L829.2 138.3L828.4 143.0L824.4 143.0Z M564.5 383.3L560.9 381.3L558.1 377.8L554.1 378.8L550.0 378.8L550.9 373.7L548.0 370.1L550.0 363.4L551.3 357.0L550.4 352.2L548.8 347.3L552.9 344.0L555.3 342.9L562.1 344.0L570.9 344.5L579.0 345.1L580.6 338.9L581.4 332.1L581.4 329.2L577.4 323.4L574.1 321.0L568.1 319.2L566.9 316.2L572.1 313.7L578.2 315.0L580.2 314.4L579.8 308.8L581.8 310.1L586.6 309.4L592.2 305.7L592.6 300.7L596.2 299.4L600.3 297.5L602.3 293.6L605.1 287.0L608.3 285.0L614.3 284.3L620.3 282.9L621.5 279.5L620.7 273.3L618.7 269.1L618.7 262.6L620.3 258.2L628.8 253.7L628.0 262.6L626.4 269.8L624.4 273.3L626.4 276.8L630.4 280.2L634.4 278.8L640.4 276.8L643.6 280.9L650.5 278.2L660.5 275.4L664.5 277.5L666.5 274.0L670.6 268.3L670.6 260.4L672.6 256.0L677.0 253.7L680.6 258.9L684.2 257.4L683.8 249.2L680.6 245.3L680.6 242.2L685.4 239.8L692.7 239.8L698.7 239.8L706.7 236.6L702.7 234.2L700.7 231.0L694.7 231.8L686.6 234.2L678.6 237.4L675.4 232.6L671.8 227.7L672.6 219.3L671.4 210.6L677.8 203.4L684.6 194.1L688.2 192.2L687.4 186.4L683.0 184.5L675.4 186.4L671.8 195.1L667.7 203.4L661.7 208.8L658.1 214.1L655.7 215.8L654.9 221.8L655.3 230.2L660.5 233.4L662.1 238.2L658.9 241.4L657.3 245.3L653.3 246.9L652.9 253.0L652.5 261.1L650.5 265.5L645.7 265.5L643.6 269.8L638.4 270.5L638.0 269.1L636.8 264.8L638.0 261.1L634.4 253.7L631.2 248.4L630.8 243.8L629.2 236.6L627.6 243.0L622.4 247.6L618.3 250.7L614.3 251.4L609.1 245.3L607.1 240.6L607.1 232.6L606.3 227.7L606.3 220.1L606.7 217.5L611.1 214.9L617.1 209.7L624.4 204.3L626.4 201.5L631.2 193.2L635.2 187.4L636.8 182.5L639.2 174.5L644.0 169.3L648.5 161.9L638.4 163.0L644.4 156.5L648.5 148.7L654.5 148.7L662.5 143.0L668.5 137.1L674.6 133.6L681.4 129.9L689.8 125.0L697.5 126.2L702.7 128.7L711.1 134.8L706.7 143.0L710.7 141.8L714.7 140.7L720.8 146.5L728.8 148.7L738.8 157.6L746.9 164.1L751.3 170.4L752.1 177.5L746.9 180.5L740.9 181.5L730.8 179.5L724.8 176.5L718.8 174.5L716.8 171.4L718.8 179.5L722.8 187.4L725.6 193.2L726.8 198.8L732.8 202.5L738.8 202.5L734.8 191.3L742.9 196.0L748.9 196.0L746.9 187.4L748.9 182.5L754.9 178.5L760.9 180.5L765.0 177.5L762.9 167.3L760.9 156.5L767.0 157.6L771.0 164.1L773.0 173.5L779.0 166.2L787.1 161.9L795.1 156.5L803.1 158.7L807.1 155.4L815.2 155.4L823.2 152.1L829.2 141.8L831.2 141.8L845.3 152.1L851.3 156.5L859.4 158.7L861.4 151.0L855.3 143.0L854.5 133.6L855.3 121.2L861.4 108.2L865.4 101.4L873.4 101.4L878.6 114.8L877.4 127.5L878.6 139.5L881.4 151.0L882.7 161.9L875.4 172.4L873.4 177.5L879.4 174.5L885.5 164.1L887.5 153.2L885.5 139.5L884.7 127.5L887.5 114.8L889.5 104.2L897.5 108.2L899.5 114.8L905.6 108.2L911.6 98.7L909.6 114.8L913.6 121.2L919.6 129.9L921.6 121.2L915.6 108.2L911.6 94.5L923.6 90.2L935.7 75.3L943.7 67.5L959.8 59.5L971.8 54.5L983.9 49.5L991.9 39.0L1005.2 26.1L1014.0 35.4L1020.0 44.3L1032.1 46.0L1042.1 56.2L1040.1 72.2L1028.1 84.4L1016.0 94.5L1012.0 101.4L1024.1 93.0L1038.1 90.2L1042.1 94.5L1044.1 93.0L1052.2 93.0L1060.2 98.7L1066.2 101.4L1076.3 101.4L1082.3 94.5L1088.3 93.0L1096.4 94.5L1104.4 104.2L1106.4 117.4L1110.4 127.5L1118.5 121.2L1120.5 116.1L1126.5 122.5L1134.5 121.2L1140.5 119.9L1146.6 110.9L1151.4 102.8L1158.6 106.9L1168.7 109.5L1176.7 110.9L1186.7 114.8L1190.8 122.5L1198.8 128.7L1210.8 127.5L1220.9 128.7L1228.9 139.5L1232.9 144.2L1249.0 144.2L1249.0 293.6L1215.7 300.7L1212.9 293.6L1211.2 280.2L1211.6 266.2L1215.7 255.2L1220.9 247.6L1228.1 237.4L1234.9 231.8L1243.0 216.7L1230.1 220.1L1230.9 230.2L1224.9 223.5L1216.9 222.7L1208.8 239.8L1200.8 242.2L1194.8 239.8L1184.7 238.2L1172.7 240.6L1160.6 241.4L1150.6 251.4L1142.6 262.6L1136.5 273.3L1130.5 276.1L1136.5 280.2L1142.6 281.6L1148.6 280.2L1153.4 285.0L1153.8 292.3L1151.8 300.0L1150.6 306.3L1149.8 312.5L1144.6 321.6L1140.5 330.4L1134.5 337.2L1128.5 344.5L1120.5 348.9L1116.4 346.7L1111.6 350.0L1110.4 351.6L1107.6 358.1L1105.6 360.7L1100.4 363.9L1098.4 367.5L1102.0 371.2L1105.6 378.8L1106.4 383.8L1105.2 387.7L1100.4 389.7L1094.4 391.6L1093.9 386.3L1094.4 379.8L1095.2 376.3L1089.5 374.7L1087.1 373.2L1089.1 366.0L1085.5 363.9L1080.3 365.5L1074.7 369.1L1073.1 366.0L1076.3 360.7L1072.3 358.6L1067.4 363.4L1060.2 367.5L1059.0 369.1L1060.2 372.7L1064.2 375.2L1064.2 377.8L1069.4 375.2L1073.9 375.8L1078.7 376.8L1077.9 379.3L1072.3 380.8L1069.4 383.8L1066.2 387.2L1065.0 389.7L1069.4 393.6L1071.9 398.4L1075.5 403.6L1075.9 407.9L1072.3 409.8L1071.5 411.2L1075.5 412.5L1076.3 416.2L1074.7 420.4L1071.5 422.2L1069.0 426.7L1066.6 430.8L1064.2 434.3L1061.0 437.4L1057.4 441.4L1055.0 442.7L1050.2 445.3L1044.9 447.1L1042.1 447.5L1038.1 449.2L1032.1 450.9L1029.7 451.8L1030.1 455.7L1027.3 455.2L1026.9 450.9L1022.4 450.1L1019.2 450.9L1016.0 453.5L1014.0 456.1L1011.6 459.9L1010.8 462.5L1014.0 466.7L1018.4 471.4L1021.2 473.4L1023.7 476.8L1024.9 483.0L1025.7 487.1L1024.9 489.6L1024.1 492.9L1020.4 494.9L1016.4 497.4L1014.8 499.4L1012.8 501.5L1008.8 504.3L1007.2 504.3L1007.6 499.4L1006.0 497.0L1002.4 496.6L1000.0 492.5L997.9 490.0L995.1 487.6L991.5 487.6L991.5 484.7L989.9 484.3L987.9 485.1L987.9 489.2L987.1 491.3L985.9 494.9L984.7 497.0L985.1 501.9L987.9 504.7L989.5 510.0L990.3 510.0L993.9 511.6L996.3 514.0L1000.4 517.3L1001.8 522.1L1001.6 523.7L1002.0 527.7L1004.8 533.4L1003.2 533.8L1001.6 533.4L996.7 530.2L993.5 527.3L990.7 522.9L989.5 517.3L989.1 513.2L986.7 511.2L985.5 508.4L982.7 506.8L981.1 507.6L981.1 503.5L981.9 499.0L982.3 494.9L981.9 490.4L980.7 484.3L980.3 481.8L979.1 476.8L978.3 471.8L975.8 469.7L972.6 471.4L969.0 474.7L965.0 473.9L965.8 468.4L965.0 463.3L962.6 459.5L959.4 456.5L957.0 453.5L955.8 450.9L955.0 447.1L952.6 445.7L949.7 448.4L945.7 449.2L940.5 449.7L937.7 450.5L935.3 453.5L934.5 456.1L930.9 457.8L927.2 460.4L924.0 464.2L920.8 466.7L916.8 470.1L912.4 473.0L908.8 476.4L908.0 480.1L908.8 485.9L907.0 490.8L907.0 495.3L906.8 497.4L904.3 501.5L900.3 503.5L897.7 506.4L895.1 504.7L892.7 498.8L890.7 493.5L886.9 486.7L883.9 478.9L882.7 476.0L880.6 469.7L878.6 461.2L878.2 455.2L877.8 452.2L877.4 447.5L875.8 451.8L871.4 454.0L868.2 452.7L865.8 450.1L863.4 447.1L868.6 444.4L863.4 444.4L861.4 442.3L857.3 440.1L855.3 436.1L853.7 433.9L847.3 433.9L841.3 434.3L836.5 434.8L829.6 433.9L823.2 433.4L818.4 432.1L815.2 428.1L812.4 425.6L807.1 427.6L801.1 427.2L797.5 424.0L793.1 422.2L790.3 417.6L787.9 412.5L783.0 410.7L781.0 412.8L779.0 415.3L780.6 419.5L783.8 424.0L787.5 428.5L787.9 432.5L790.3 436.1L790.3 433.0L791.9 430.3L793.5 433.9L793.1 437.4L797.5 438.7L801.5 439.2L804.7 437.6L808.3 433.9L811.6 430.3L812.8 429.4L812.6 433.9L814.0 438.3L818.4 440.9L821.6 441.4L826.4 446.2L824.8 450.9L822.4 454.8L818.4 456.1L818.0 461.2L813.2 465.5L809.1 467.1L803.5 469.7L795.9 473.0L791.9 477.2L783.4 480.1L777.0 482.6L767.0 487.1L760.9 487.6L760.1 485.1L758.7 478.9L758.1 475.1L756.9 470.1L752.9 464.6L750.9 460.4L746.9 455.7L743.7 450.5L742.5 444.9L738.8 439.2L735.6 435.2L732.8 429.9L729.2 424.9L726.8 421.3L725.6 421.3L726.8 414.9L723.6 406.5L725.6 403.2L726.8 399.4L728.8 394.1L730.0 391.2L730.0 386.3L731.6 380.8L728.8 380.8L725.2 379.8L722.4 382.3L718.0 383.8L714.7 381.3L709.5 379.3L708.7 382.3L705.1 382.8L703.1 380.8L699.9 379.8L696.3 378.8L695.5 374.2L692.2 372.2L694.3 371.2L693.9 368.6L693.5 367.0L691.0 366.0L691.4 363.4L691.0 360.2L690.2 358.9L684.2 358.4L682.2 361.3L683.8 362.6L682.2 361.8L682.6 363.4L680.2 362.3L681.4 363.6L679.8 362.3L678.2 360.2L677.0 363.4L678.2 366.8L679.8 367.5L678.6 369.6L681.0 371.2L682.8 375.5L681.0 374.0L678.6 374.2L679.4 377.3L677.8 376.0L679.0 381.5L677.0 379.8L676.6 381.8L675.0 378.8L673.4 379.8L671.8 375.5L671.0 374.5L673.4 372.4L671.0 371.9L669.4 369.1L667.3 366.0L666.5 364.2L664.1 361.0L664.3 356.5L664.1 353.5L662.9 352.2L660.5 350.3L658.9 349.2L655.3 346.7L652.3 344.5L650.1 343.4L647.3 341.2L646.1 336.1L644.2 334.2L642.4 337.2L640.8 335.5L641.4 332.4L638.8 332.1L635.6 333.8L635.6 336.7L635.6 340.6L640.4 344.0L643.2 350.0L646.9 353.3L651.3 353.3L650.1 354.9L654.1 357.6L658.5 360.0L660.5 362.9L659.9 364.4L658.1 362.1L655.3 361.0L652.9 362.9L652.5 364.9L655.1 368.1L652.9 369.6L652.7 371.7L650.9 374.0L649.1 373.2L649.7 370.6L651.3 368.6L649.7 363.9L647.7 363.1L646.3 361.3L645.5 360.0L643.6 360.2L643.4 358.9L640.8 356.8L636.8 355.7L635.4 354.1L633.6 352.2L630.8 350.6L628.4 347.6L627.6 344.2L625.8 341.2L622.2 339.5L619.1 341.7L616.3 343.1L615.3 343.4L612.9 345.9L610.1 346.7L607.7 345.6L605.5 345.4L602.7 344.2L601.1 345.1L598.5 347.3L598.5 349.7L599.1 351.1L598.9 353.3L595.0 356.0L591.2 357.6L589.6 359.7L586.2 363.6L584.8 366.3L587.0 369.9L584.2 371.9L583.2 375.5L582.2 375.8L578.8 378.8L577.4 380.2L576.4 379.6L572.1 380.2L568.5 380.2L565.5 381.7Z M1109.2 406.9L1112.0 407.9L1114.0 405.5L1116.0 399.4L1115.2 397.0L1112.4 394.1L1110.0 395.5L1107.2 397.0L1107.2 400.3L1109.2 400.8L1109.2 404.6Z M1112.0 393.6L1114.0 391.6L1119.3 386.5L1121.7 386.0L1125.3 386.0L1129.3 385.0L1132.5 385.5L1132.9 382.8L1135.3 380.3L1135.5 377.3L1137.7 376.3L1136.7 378.5L1137.3 380.0L1141.6 377.8L1144.6 374.2L1146.6 370.6L1147.8 369.1L1148.6 364.9L1148.2 360.2L1149.8 357.0L1151.8 358.9L1153.8 356.0L1154.6 360.7L1156.6 365.5L1155.0 372.2L1152.6 372.7L1152.6 378.8L1151.0 382.3L1152.0 385.1L1150.2 387.7L1148.0 389.2L1147.8 385.8L1147.0 388.0L1145.0 387.5L1144.0 390.7L1142.6 388.7L1141.3 390.7L1137.3 390.4L1136.1 388.7L1134.7 390.2L1136.1 392.1L1133.5 394.1L1131.6 396.2L1128.9 393.6L1129.1 392.4L1130.1 390.4L1127.3 389.9L1124.3 391.2L1121.3 391.9L1118.3 391.9L1116.8 394.1L1114.4 393.6Z M1118.9 393.6L1120.5 393.1L1124.7 391.9L1126.9 392.6L1127.5 394.3L1125.3 397.2L1122.7 396.0L1120.5 399.7L1118.5 398.9L1118.1 396.5L1116.6 396.7Z M1148.8 355.7L1149.8 351.6L1148.0 350.0L1149.8 346.2L1153.4 346.2L1155.2 341.7L1155.4 334.4L1156.4 333.1L1160.2 338.4L1165.9 341.7L1170.1 339.8L1169.1 343.4L1171.9 345.4L1166.3 347.6L1161.8 352.7L1156.6 349.7L1152.6 351.1L1150.2 350.0L1151.4 352.2L1153.4 353.8L1151.4 354.1Z M1156.6 331.0L1157.0 326.9L1156.8 321.6L1157.0 315.6L1156.6 309.4L1157.4 303.2L1155.8 295.5L1156.2 290.3L1155.4 285.0L1157.8 283.6L1159.0 278.2L1160.6 282.3L1161.8 290.3L1161.8 296.8L1163.8 304.5L1165.9 310.7L1167.5 313.1L1161.4 310.7L1159.8 318.6L1159.0 322.8L1162.6 325.7L1162.2 330.1L1159.8 326.9L1158.2 329.8Z M1074.3 433.9L1076.3 435.2L1074.7 439.6L1073.1 444.9L1071.7 448.8L1069.4 445.7L1068.6 441.8L1070.2 438.3L1072.3 435.2Z M1022.8 460.4L1025.3 457.4L1029.3 456.5L1032.1 458.5L1030.1 462.1L1026.1 464.6L1022.8 463.3Z M907.0 499.4L908.6 499.3L912.4 504.5L915.0 509.6L914.4 512.8L910.0 515.1L907.8 514.4L907.0 511.0L906.8 507.2L907.2 503.1Z M1070.7 463.1L1075.9 464.2L1077.1 463.3L1077.5 468.4L1074.7 473.9L1074.7 478.4L1077.5 481.4L1081.5 482.6L1084.7 486.3L1084.3 488.2L1081.5 486.3L1078.7 485.5L1078.3 482.6L1075.1 482.6L1073.1 483.8L1070.7 483.0L1070.7 481.4L1072.1 479.7L1070.4 480.3L1069.0 478.9L1067.8 474.7L1067.4 472.4L1069.4 473.7L1069.4 471.4L1069.8 467.1Z M1089.9 499.4L1093.1 502.7L1094.8 509.6L1093.1 513.6L1091.1 511.2L1089.9 511.6L1091.1 516.5L1089.1 515.1L1084.3 513.2L1085.1 510.0L1081.9 509.2L1082.1 507.6L1079.5 508.8L1076.7 511.2L1076.7 508.0L1079.9 505.1L1081.9 504.1L1083.7 506.3L1087.1 504.7L1088.7 502.7L1090.3 502.7Z M1085.5 488.4L1089.5 488.2L1091.1 493.7L1088.7 494.1L1087.5 492.5L1085.9 490.4Z M1085.5 492.9L1088.3 493.3L1089.1 497.4L1087.5 498.4L1086.7 495.8Z M1078.3 497.0L1079.9 494.5L1082.3 495.3L1081.5 499.0L1080.7 502.5L1078.3 500.7Z M1075.9 490.8L1078.7 492.1L1080.7 492.5L1080.3 494.9L1077.1 496.8L1076.1 496.2L1076.7 492.5Z M1081.9 498.6L1084.3 493.7L1084.7 494.9L1083.1 498.6Z M1083.5 499.8L1085.1 498.2L1086.7 499.0L1085.5 500.2Z M1057.0 505.1L1058.2 505.5L1062.2 501.1L1065.4 497.0L1066.6 493.3L1065.0 492.9L1062.6 497.8L1059.0 501.9Z M1069.4 484.7L1072.3 484.3L1074.3 485.9L1073.5 489.2L1071.9 489.6L1071.1 486.7Z M1024.3 531.4L1026.7 530.8L1029.3 532.2L1032.1 532.6L1033.3 527.7L1036.1 527.3L1040.1 526.1L1043.9 521.3L1046.5 519.3L1049.4 517.7L1052.4 514.9L1055.0 511.2L1057.0 512.0L1059.0 514.0L1060.6 515.5L1065.0 517.7L1062.6 520.9L1059.8 521.9L1058.6 525.3L1060.2 530.2L1063.8 535.0L1059.8 535.8L1058.2 539.0L1057.4 541.4L1055.4 544.2L1053.8 547.8L1053.4 551.1L1052.2 553.5L1046.9 555.7L1046.1 552.7L1042.1 552.3L1038.5 552.7L1034.9 551.1L1031.7 550.7L1028.5 547.0L1028.1 544.2L1025.3 541.0L1024.1 537.8L1023.7 535.0Z M969.0 516.5L976.7 518.1L979.9 520.9L982.7 523.7L987.1 526.9L991.1 530.6L993.9 532.2L997.9 535.0L1001.6 537.0L1003.2 540.2L1002.0 543.0L1005.6 543.4L1007.6 548.2L1012.0 551.1L1011.6 555.9L1011.6 562.3L1008.8 562.3L1006.4 562.7L1003.6 559.5L997.1 554.3L991.9 548.6L989.3 542.8L984.3 537.8L983.1 532.2L978.7 529.0L975.0 524.5L972.2 522.3L969.0 518.1Z M1008.8 566.4L1012.0 562.9L1015.2 563.6L1021.2 564.4L1022.0 566.0L1029.7 567.0L1031.7 564.8L1034.1 565.8L1038.5 566.8L1039.3 568.0L1043.7 570.0L1045.7 570.4L1045.7 573.7L1040.9 572.5L1034.9 572.7L1028.1 570.8L1022.8 570.0L1018.8 569.8L1014.0 568.6L1010.0 566.6Z M1038.9 567.4L1042.1 566.8L1044.5 567.2L1043.3 568.0L1039.3 568.0Z M1045.9 571.9L1049.0 571.4L1051.0 572.9L1049.0 574.5L1046.5 572.9Z M1051.6 574.3L1052.6 572.7L1055.0 572.7L1054.6 574.9L1052.2 574.9Z M1055.2 573.3L1058.2 572.9L1060.2 571.7L1061.4 572.7L1064.6 572.1L1064.6 574.1L1061.8 574.7L1059.4 574.9L1056.2 575.5Z M1067.6 572.9L1071.5 572.5L1075.5 573.3L1079.5 571.7L1080.3 572.9L1077.5 574.3L1073.5 574.9L1069.0 574.5Z M1064.2 577.1L1067.8 576.5L1071.5 579.4L1069.0 580.4L1065.4 578.6Z M1082.3 580.6L1084.7 576.9L1088.3 574.1L1092.3 573.3L1097.6 572.9L1094.4 575.3L1089.5 577.8L1085.1 580.2Z M1071.5 533.8L1074.3 534.6L1078.3 535.0L1082.3 535.2L1085.5 534.2L1087.7 533.0L1089.1 532.4L1087.9 535.2L1085.5 537.4L1080.7 537.0L1075.5 537.2L1070.7 537.0L1068.6 538.2L1068.4 541.8L1071.5 544.6L1074.7 542.6L1081.5 541.8L1081.9 543.0L1077.1 545.4L1074.7 546.8L1073.5 547.0L1077.5 551.1L1078.3 554.7L1079.9 556.7L1077.1 558.5L1074.7 558.3L1074.3 555.1L1072.3 550.3L1069.8 550.9L1069.8 557.1L1069.8 561.1L1066.2 561.5L1065.8 559.7L1066.6 555.1L1065.4 552.9L1063.8 553.1L1063.4 549.9L1065.4 546.6L1066.2 543.0L1067.4 541.8L1067.4 538.6L1068.6 536.0Z M1098.4 535.0L1100.0 530.2L1100.8 533.0L1103.2 533.0L1101.2 535.4L1104.0 537.8L1101.2 537.4L1102.0 542.2L1100.0 540.2L1098.8 537.4Z M1100.0 551.9L1104.4 550.3L1111.6 552.3L1109.2 553.5L1104.4 552.7L1101.2 553.1Z M1092.5 551.9L1096.0 551.5L1097.2 553.1L1094.8 554.5L1092.7 553.5Z M1112.4 542.2L1118.1 540.4L1124.9 542.2L1125.3 545.4L1126.5 549.0L1128.1 552.3L1130.5 552.5L1134.1 548.2L1140.1 545.0L1146.6 547.4L1151.4 549.2L1153.8 549.9L1158.6 551.9L1163.2 553.3L1167.1 554.5L1171.9 559.9L1173.9 561.5L1177.1 562.9L1180.1 566.0L1176.7 566.2L1177.5 569.2L1181.1 571.7L1182.3 573.9L1185.9 575.3L1188.3 577.8L1192.0 580.4L1188.8 581.8L1184.7 580.6L1179.5 579.6L1177.3 577.3L1174.7 574.9L1171.9 571.0L1167.9 569.8L1164.2 570.8L1162.2 572.7L1161.4 575.3L1157.0 576.1L1152.6 575.7L1148.2 571.7L1144.6 572.1L1140.5 572.9L1139.3 572.9L1142.6 568.0L1143.8 566.0L1140.9 561.5L1136.5 558.7L1132.1 557.1L1127.3 555.1L1123.3 553.9L1120.5 555.5L1119.5 552.3L1117.6 550.9L1116.0 550.3L1121.7 549.0L1124.1 548.2L1119.7 547.8L1116.4 547.0L1113.2 544.6L1112.0 544.2Z M1181.9 561.9L1186.7 561.1L1192.0 561.1L1194.8 558.7L1198.0 555.9L1197.6 558.7L1194.8 561.5L1190.0 564.4L1184.7 564.0Z M1191.6 549.4L1196.0 551.9L1199.6 555.1L1200.8 557.9L1199.2 557.1L1194.8 552.7Z M1207.2 560.7L1210.0 562.3L1212.5 565.6L1210.8 566.8L1208.0 564.0Z M1044.7 628.8L1046.5 629.2L1045.7 631.8L1049.4 627.9L1055.0 623.8L1059.4 623.6L1062.6 622.3L1067.4 620.8L1073.1 618.9L1075.5 614.7L1077.1 612.3L1077.1 608.3L1079.9 605.8L1082.7 609.6L1082.7 605.4L1085.9 605.4L1086.7 601.6L1089.1 598.3L1092.3 595.4L1096.2 594.8L1099.6 597.9L1100.8 600.8L1104.8 599.6L1107.2 595.8L1109.2 591.7L1111.6 589.4L1114.4 588.4L1118.1 588.0L1118.9 585.5L1116.0 584.3L1122.5 586.7L1128.9 588.4L1132.5 587.6L1135.7 588.4L1136.3 589.0L1134.9 592.5L1132.1 594.6L1132.1 599.1L1130.1 598.9L1133.3 602.5L1139.3 605.8L1144.6 607.9L1147.0 610.6L1151.8 610.4L1154.2 604.1L1155.2 600.0L1155.0 595.4L1155.8 590.0L1157.0 583.5L1158.6 582.2L1160.2 585.5L1161.8 590.0L1163.0 595.8L1164.6 597.7L1167.1 597.1L1169.7 601.8L1170.7 605.4L1171.9 607.9L1173.1 612.1L1173.9 615.5L1175.9 617.8L1179.1 618.9L1181.9 621.0L1183.9 622.8L1185.5 626.0L1187.1 630.9L1189.6 631.8L1192.0 634.9L1194.0 637.7L1196.8 640.6L1198.4 642.1L1200.8 644.1L1201.6 646.8L1201.2 650.4L1201.6 653.5L1202.6 656.7L1203.2 659.2L1202.2 662.7L1201.4 666.8L1200.4 672.2L1198.8 675.8L1196.0 679.1L1194.0 683.7L1192.4 686.6L1191.8 689.8L1189.6 693.0L1188.8 698.7L1188.5 701.7L1181.9 703.5L1176.7 706.8L1174.3 709.9L1170.7 707.4L1168.7 706.6L1168.3 703.8L1166.3 705.3L1162.8 708.6L1158.6 706.3L1155.0 706.1L1151.0 704.3L1147.8 699.2L1147.0 694.2L1144.2 692.0L1140.9 692.5L1142.6 688.8L1140.9 685.4L1139.5 690.0L1136.1 690.8L1138.5 684.9L1140.1 680.5L1139.7 677.2L1138.5 679.8L1136.1 683.2L1132.9 686.8L1132.1 688.1L1130.9 689.0L1129.3 686.8L1127.9 682.5L1125.3 678.4L1123.3 675.3L1117.2 674.8L1112.8 672.5L1104.4 673.4L1097.6 676.0L1092.3 676.2L1086.7 679.6L1083.1 683.4L1075.9 683.8L1068.2 684.2L1065.8 686.4L1059.8 689.5L1055.0 689.3L1048.8 686.1L1048.2 682.2L1050.6 681.0L1051.0 677.4L1051.2 675.1L1050.2 671.5L1048.4 666.8L1047.8 662.0L1046.5 659.8L1044.7 654.9L1042.5 649.9L1040.7 647.9L1043.7 648.6L1042.7 642.3L1041.7 639.3L1043.1 634.7L1042.7 632.3L1043.7 629.2Z M1167.5 718.3L1172.3 720.2L1175.9 720.4L1180.5 718.6L1181.9 721.5L1181.9 725.8L1180.3 730.2L1180.7 731.8L1177.9 730.7L1176.3 734.0L1172.7 733.5L1170.7 730.2L1169.5 726.4L1167.5 721.0Z M1110.0 585.1L1114.4 585.1L1113.6 586.7L1110.0 586.7Z M1134.1 595.0L1136.1 595.0L1136.1 597.1L1134.1 596.6Z M1134.9 693.0L1138.9 692.2L1140.9 693.5L1138.5 694.5L1135.3 694.2Z M971.8 -10.5L975.8 4.4L987.9 16.5L1000.0 16.5L1008.0 12.5L1004.0 0.2L995.9 -10.5Z M1137.3 59.5L1142.6 54.5L1150.6 61.1L1158.6 59.5L1164.6 69.1L1162.6 73.8L1152.6 75.3L1148.6 82.9L1140.5 75.3L1137.3 67.5Z M1174.7 66.0L1182.7 66.0L1190.8 69.9L1186.7 75.3L1176.7 72.2Z M1148.6 88.7L1154.6 88.7L1162.6 94.5L1156.6 98.7L1149.8 95.9Z M1164.6 62.7L1170.7 62.7L1172.7 69.1L1166.7 72.2Z M866.6 94.5L871.4 93.0L873.4 98.7L869.4 101.4L866.6 98.7Z M93.5 50.0L98.5 44.6L103.6 40.5L108.0 33.0L115.7 31.4L120.8 29.4L120.2 34.4L118.8 40.5L113.7 44.6L110.7 50.0L105.6 54.7L102.6 56.7L98.5 55.7L93.5 54.7Z M131.9 10.2L142.0 5.1L146.1 8.1L146.5 12.2L138.0 13.2L132.9 12.2Z M131.9 21.3L141.0 18.3L144.1 22.3L142.4 29.4L137.0 31.4L132.9 27.4Z M114.7 57.7L122.8 47.6L128.9 51.2L136.0 54.7L139.6 62.8L144.5 61.4L144.1 48.6L148.5 41.9L151.7 50.6L155.2 57.7L160.7 55.3L162.3 63.8L158.2 70.9L144.1 73.9L139.0 78.4L130.9 80.0L126.2 76.9L133.9 70.9L123.8 69.9L115.3 66.8L119.4 61.4Z M174.4 46.6L184.5 44.6L193.6 46.6L194.7 57.7L192.6 64.8L194.7 68.9L184.5 70.9L182.5 65.8L186.6 59.7L180.5 57.7L175.4 61.8Z M166.3 45.6L171.4 46.6L172.4 52.7L167.3 53.7Z M160.7 25.3L164.3 27.4L166.9 34.4L163.9 35.5Z M166.3 65.8L170.0 66.8L169.4 70.3L165.9 69.5Z M199.7 65.8L205.8 61.4L210.8 66.8L210.8 74.9L203.8 76.3L199.1 69.9Z M197.7 38.5L204.8 37.5L211.9 42.5L216.9 47.6L224.0 45.6L227.0 57.7L231.1 61.8L241.2 62.8L252.3 57.7L264.5 60.8L267.5 66.8L264.5 76.9L252.3 79.6L231.1 79.0L216.9 75.9L214.9 67.8L216.9 59.7L214.9 51.6L208.8 50.6L201.7 48.6Z M238.2 -1.0L235.1 9.1L238.2 17.2L245.3 13.2L244.2 19.3L252.3 27.4L249.3 29.4L240.2 23.3L234.1 23.3L233.1 30.4L236.1 34.4L229.1 37.5L224.0 42.5L227.0 45.6L245.3 48.6L255.4 45.6L261.4 51.6L273.6 44.6L272.6 39.5L265.5 32.4L257.4 29.4L272.6 25.3L271.6 20.3L277.6 19.3L282.7 18.3L285.7 5.1L279.7 -1.0Z M208.8 -1.0L214.9 9.1L216.9 15.2L225.0 16.2L231.1 11.2L233.1 -1.0Z M191.6 5.1L198.7 4.1L205.8 12.2L203.8 20.3L196.7 22.9L192.6 16.2Z M165.3 -1.0L168.3 6.1L165.3 12.2L173.4 12.2L181.5 15.2L183.5 22.3L187.6 20.9L187.6 16.2L184.5 11.2L182.1 5.1L176.4 -1.0Z M200.7 25.3L210.8 24.3L211.9 29.0L201.7 29.4Z M221.0 27.0L226.0 31.4L224.0 34.4L220.0 30.4Z M85.4 82.0L96.5 78.6L108.0 85.0L113.7 83.0L122.2 92.1L108.0 103.3L103.2 112.4L101.6 120.5L92.4 124.9L87.4 118.4L81.3 113.4L84.3 100.2L88.4 90.1Z M110.7 106.3L124.8 95.8L128.9 102.2L136.0 102.2L144.1 107.3L151.7 116.4L152.2 98.2L160.2 90.1L165.9 94.2L163.3 102.2L166.3 118.4L167.9 128.6L178.5 135.6L180.5 140.7L174.4 147.8L160.2 146.8L155.2 151.8L144.1 153.9L132.9 155.9L128.9 150.8L121.8 147.8L115.7 141.7L115.3 138.7L136.0 132.6L133.9 130.6L121.8 131.6L111.7 128.6L110.7 125.5L120.8 120.5L109.6 118.4L107.2 115.4Z M174.4 102.2L179.5 100.2L184.5 92.1L180.5 89.1L188.6 87.1L195.7 90.1L194.7 98.2L198.7 106.3L196.7 116.4L190.2 122.5L184.5 114.4L179.5 110.3Z M203.8 87.1L210.8 84.4L222.6 87.7L216.9 103.3L209.8 104.3L207.8 114.4L203.8 106.3L202.3 96.2Z M189.6 142.7L194.7 140.7L201.7 152.8L196.7 155.9L189.6 150.8Z M241.8 183.9L244.7 184.5L245.9 188.6L256.6 193.4L259.5 198.7L263.7 202.8L261.3 205.2L254.2 202.3L251.8 200.5L248.9 203.4L243.5 207.6L242.4 204.6L237.0 204.0L239.4 199.9L238.8 196.3L240.6 189.2Z M250.1 211.7L256.6 210.5L254.2 215.9L250.6 216.5Z M264.9 217.1L267.2 216.5L266.0 220.6L264.6 220.0Z M233.1 90.5L245.3 89.1L242.2 96.2L238.8 104.3L242.2 113.4L246.3 120.5L246.3 110.3L244.2 101.2L247.3 95.2L254.4 91.1L261.4 94.2L263.1 102.2L262.5 110.3L265.5 107.3L265.5 98.2L263.5 93.1L272.6 91.1L278.7 96.2L280.1 102.2L272.6 105.3L283.7 107.3L287.8 116.4L299.9 122.5L310.0 129.6L316.1 138.7L318.1 147.8L312.0 154.9L324.2 160.9L336.3 173.1L337.3 179.2L329.3 189.3L320.1 180.2L316.1 179.2L318.1 187.3L325.2 196.4L327.0 204.6L325.8 212.9L317.0 207.0L311.0 204.9L313.4 209.4L320.5 217.6L321.7 219.4L312.2 215.9L306.3 211.7L299.2 208.8L295.6 203.4L289.7 196.9L280.2 198.7L274.3 197.5L273.1 192.2L277.9 187.5L285.0 188.6L289.7 184.5L287.4 180.4L296.2 170.3L294.5 162.0L291.8 156.9L281.7 147.8L269.5 146.8L274.6 138.7L267.5 136.7L255.4 139.7L238.2 135.6L228.1 129.6L233.1 123.5L227.0 120.5L226.0 110.3L228.1 98.2Z" fill="#f3f6f9" stroke="#f3f6f9" stroke-width=".6" stroke-linejoin="round"/><path d="M90.1 191.3L100.1 193.2L106.2 188.4L112.2 182.5L113.8 176.5L106.2 173.5L98.1 172.4L92.1 176.5L86.1 179.5L84.1 183.5L90.1 185.5Z M116.2 226.8L121.0 228.9L128.3 227.7L132.3 224.3L136.3 219.3L144.3 214.9L147.5 212.3L142.3 211.4L134.3 214.1L128.3 215.4L121.0 212.3L123.4 219.3L118.2 223.5Z M139.5 246.9L148.3 243.8L160.4 242.2L162.4 239.8L152.4 239.8L142.3 243.0Z M197.4 303.8L199.4 298.7L197.4 293.6L196.6 291.6L195.3 283.6L190.5 280.9L187.7 285.6L190.9 290.3L193.7 293.6L196.1 298.1L196.1 303.2Z M216.2 326.3L222.7 326.9L227.5 325.4L232.7 321.9L231.1 325.1L235.1 327.5L240.7 326.9L244.8 326.0L246.8 327.8L246.4 324.5L245.2 318.9L239.5 314.4L235.5 313.7L231.9 312.8L230.3 315.6L227.9 316.2L226.3 318.6L221.1 321.6L219.4 322.8Z M234.3 354.3L235.5 354.8L238.3 352.7L239.9 347.3L238.7 341.7L239.9 337.8L242.3 335.0L244.8 331.8L245.8 331.5L242.7 330.1L238.7 331.2L236.7 332.1L234.3 335.5L232.7 338.7L235.1 336.7L234.7 340.6L233.1 347.3L233.5 351.1Z M246.0 331.5L250.8 334.1L251.6 336.7L251.6 340.1L249.2 343.7L252.8 341.5L254.8 345.6L255.2 347.3L258.0 345.6L258.0 343.1L259.2 338.9L258.4 334.7L261.2 338.4L264.8 338.9L265.2 337.2L264.4 334.1L261.6 331.0L258.8 330.4L254.8 329.2L249.2 328.6L248.4 330.4Z M250.8 354.3L254.0 355.7L258.0 355.4L264.4 351.9L269.3 348.1L267.7 348.0L264.0 348.5L260.0 349.2L256.8 351.4L254.8 353.0L252.4 352.5Z M265.6 345.6L267.3 343.8L271.7 342.0L276.9 342.3L278.9 340.6L280.1 344.2L278.9 344.8L274.5 345.8L268.9 345.8Z M713.5 537.4L720.8 537.8L723.6 541.0L720.8 549.0L714.7 549.4L713.5 543.0Z M703.1 357.0L707.9 357.0L712.3 356.5L715.9 354.1L722.0 352.7L727.2 352.5L730.8 354.3L732.0 356.5L736.8 357.6L740.5 358.6L745.7 358.1L750.9 356.0L753.3 354.6L753.3 351.6L750.9 347.3L747.7 345.1L745.7 344.0L740.9 340.1L738.0 337.8L736.0 336.1L733.6 335.0L736.8 333.8L738.8 330.4L740.1 326.3L744.1 323.9L742.5 323.4L736.8 323.9L734.0 326.0L728.4 328.1L726.8 329.8L727.6 333.3L732.4 333.8L728.4 336.1L724.0 338.9L721.2 339.5L720.8 338.4L720.4 335.0L716.8 334.1L719.6 331.2L721.6 329.8L716.8 329.8L712.7 328.6L713.1 326.9L709.7 327.5L708.3 329.8L705.5 333.8L705.1 337.0L701.3 340.6L701.1 344.2L698.3 346.2L696.7 350.0L698.7 352.7L699.5 355.4Z M694.7 361.3L698.3 361.5L702.7 361.3L706.3 359.4L703.1 358.1L698.7 358.1L696.7 358.4L694.7 360.2Z M775.0 332.7L783.0 327.5L791.1 325.1L799.1 325.7L799.9 334.4L793.1 334.4L791.1 338.9L788.3 338.9L791.9 346.2L797.1 350.0L797.9 355.4L803.1 355.4L803.1 358.1L798.7 363.4L801.1 366.0L802.3 371.2L802.7 377.3L797.1 380.3L791.1 380.3L787.1 377.3L783.0 371.7L784.2 367.0L785.0 361.8L788.7 361.3L785.0 359.7L783.0 355.4L780.2 352.2L777.4 347.3L777.0 341.7L774.2 337.8L775.8 335.0Z M821.2 331.5L827.2 326.9L832.0 329.2L831.2 336.1L827.2 341.7L822.4 340.1L820.4 336.1Z M881.4 333.3L885.5 326.9L891.5 325.7L901.5 326.3L904.3 328.6L895.5 329.2L887.5 331.5L884.3 336.1Z M1002.8 296.8L1007.2 297.5L1012.0 292.3L1018.0 289.0L1023.2 282.9L1026.9 274.7L1027.7 267.6L1024.9 267.6L1022.8 274.7L1018.8 281.6L1013.2 285.6L1008.0 292.3Z M707.1 235.8L712.7 236.2L718.4 231.8L716.8 226.0L710.7 221.8L706.7 226.8Z M724.0 227.7L728.8 228.5L732.4 222.7L728.8 214.9L724.8 214.1L726.8 221.8Z M300.4 173.2L308.1 177.4L301.6 181.5Z M298.0 189.8L301.0 192.2L298.6 194.0Z" fill="#d1dfe8"/><path d="M0 539.0H1230" stroke="#eef3f6" stroke-width="1.1" stroke-dasharray="7 4" fill="none"/><path d="M19.8 143.6L19.8 233.4L27.4 235.0L33.9 244.5L37.9 240.6L41.9 237.4L44.3 241.4L50.3 248.4L55.2 258.2L56.8 261.9L63.6 265.5L64.0 271.2L61.6 275.4 M91.7 312.5L204.0 312.5L204.0 310.2L206.2 314.2L211.0 315.0L215.4 316.8L219.0 318.2L221.5 317.4L226.3 318.6 M246.4 327.5L249.2 329.8 M255.0 347.3L254.8 349.5L252.4 351.4L252.2 352.7 M279.3 341.2L283.7 337.0L286.1 336.1L299.0 336.1L299.4 334.7L301.6 334.7L303.4 331.5L304.0 329.2L304.8 328.1L305.1 326.3L308.1 321.8L309.4 323.5L311.8 322.4L313.8 324.1L313.9 331.0L315.3 332.7L315.3 335.0L316.5 335.3 M115.7 400.7L125.4 399.7L125.0 400.8L140.0 406.3L151.6 406.3L151.6 404.2L158.4 404.2L159.6 405.8L164.4 409.5L166.4 414.2L171.8 417.3L173.7 413.9L178.9 413.6L181.9 416.7L183.3 420.4L186.5 424.0L188.1 429.0L191.7 430.5L195.9 431.0 M215.8 479.9L215.8 477.2L217.6 473.7L222.9 473.6L219.0 468.6L220.7 468.6L220.7 466.2L228.1 466.2L228.1 474.3L229.1 474.3 M228.1 466.2L228.3 465.5L231.5 463.3 M231.7 475.1L227.9 480.5L224.3 483.2 M227.9 480.5L230.7 482.6L233.5 484.7 M235.5 486.3L237.9 483.2L241.9 482.2L245.6 478.9L252.0 478.0 M241.9 494.1L246.0 494.5L250.2 494.9 M253.2 506.6L253.2 500.7L254.6 500.2 M273.3 510.0L276.1 507.2L275.5 504.1 M298.2 458.2L298.2 462.1L297.0 462.9L298.0 465.2 M299.8 491.3L295.4 494.1L293.0 501.9L295.4 505.1L295.4 509.2L297.4 510.8L304.6 510.8L307.4 514.4L315.1 514.0L313.8 520.9L315.9 525.3L313.8 527.7L316.7 532.2L317.6 534.1 M317.6 534.1L315.5 530.6L305.6 532.2L305.6 534.7L308.6 536.4L304.8 536.8L304.8 539.6L307.4 543.4L305.2 555.9 M305.2 555.9L302.2 554.3L304.8 549.9L293.4 548.8L288.1 543.0L283.7 539.4 M283.7 539.4L279.7 537.4L274.9 536.4L269.7 533.4 M283.7 539.4L282.7 545.2L278.5 549.4L271.7 552.7L271.3 557.5L268.9 559.1L264.4 556.3L263.6 552.7 M305.2 555.9L293.4 560.3L292.2 563.6L290.1 566.8L288.9 569.2L293.0 575.7L295.8 577.3L296.2 579.4L302.6 578.6L302.6 583.5L306.7 583.3 M306.7 583.3L310.2 589.6L309.0 594.6L308.2 598.7L307.4 602.0L309.0 605.0L306.6 609.6L307.0 610.4L303.4 614.0 M306.7 583.3L310.6 583.9L318.7 579.0L323.5 578.6L323.9 585.5L327.5 589.4L333.1 590.2L337.9 593.7L343.2 595.0L344.4 605.4L351.6 605.4L352.0 609.6L355.2 613.4L354.0 616.8L352.6 620.2L352.6 621.7 M352.6 621.7L348.8 618.3L338.2 619.5L335.9 623.4L334.5 630.7L329.3 629.6L327.9 633.1L324.3 630.1L320.3 628.8L316.3 633.1 M307.0 610.4L309.2 616.8L311.0 621.0L312.2 627.5L313.4 633.1L316.3 633.1L315.9 638.4L311.4 640.6L311.0 648.6L311.8 651.7L308.6 655.4L306.2 658.5L305.0 665.5L303.0 672.5L304.6 679.6L305.6 685.4L303.4 690.3L303.4 694.7L300.6 696.7L300.6 704.3L298.6 712.0L297.8 719.9L297.8 728.0L298.2 736.3L299.8 741.9L298.2 750.5L295.8 759.4L291.8 768.6L293.0 776.1L295.8 778.0L297.0 784.4L305.2 784.8L311.2 786.7 M334.5 630.7L341.2 637.5L347.2 640.6L354.8 644.1L350.8 653.1L360.0 653.5L361.6 653.1L366.1 650.4L366.9 645.5 M352.6 621.7L353.4 630.1L362.3 631.4L362.9 637.9L368.1 638.6L366.9 645.5L370.7 648.1L370.1 652.4L362.5 657.6L354.8 666.4L352.4 676.7L351.6 683.9 M354.8 666.4L361.6 670.6L367.3 672.5L370.5 675.3L371.7 683.2 M317.6 534.1L323.1 535.4L329.1 531.2L331.5 530.2L328.3 522.5L333.5 524.1L341.2 520.9L342.4 518.1L339.6 515.1L340.8 512.0L344.0 510.4L346.0 505.5 M342.4 518.1L344.8 520.9L347.0 523.1L345.8 524.5L346.0 529.8L350.0 534.2L359.3 531.2L356.0 525.7L353.6 522.9L356.0 518.9L356.6 515.3 M359.3 531.2L361.2 529.6L366.9 529.6L368.5 524.5L367.5 519.3L369.3 516.1 M366.9 529.6L373.7 530.2L378.7 522.3 M533.3 423.2L551.4 423.2L551.4 424.9L566.9 435.2L591.0 452.2L591.0 454.0L599.1 457.8L599.5 461.2L603.3 460.6L609.5 459.3L634.3 441.8 M551.4 423.2L551.4 418.5L557.7 414.4L564.9 413.0L568.5 409.8L571.7 409.3L574.1 404.1L581.4 402.7L579.4 397.0L579.0 391.6L577.4 388.2 M517.7 453.5L534.0 451.3L534.0 444.0L538.0 442.0L538.0 430.8L551.4 430.8L551.4 424.9 M551.4 424.9L562.1 435.2L560.1 435.2L563.7 471.8L564.9 472.6L564.1 476.0L548.8 476.0L542.4 477.6L540.0 475.5L537.2 478.9L528.8 471.4L519.9 473.4 M537.2 478.9L540.4 488.8L540.4 490.4L531.2 487.6L519.1 489.0 M518.7 485.7L530.8 484.7L525.9 483.0L519.5 483.8 M531.2 487.6L531.2 491.7L525.9 494.5L525.9 494.9 M540.4 490.4L543.2 490.8L548.8 488.8L552.9 494.5L554.1 497.8L552.9 500.7L554.9 504.7L552.1 508.4L548.4 509.2L544.8 504.7L543.6 502.3L541.2 498.6L536.0 499.0L532.8 502.5 M544.8 504.7L543.6 506.8L540.0 511.2 M552.1 508.4L552.9 513.6L556.5 515.5L555.9 521.5 M554.1 497.8L561.3 495.8L564.1 497.0L568.9 500.2L575.4 500.7L575.0 507.6L573.3 511.6L575.2 518.5 M564.1 497.0L564.9 491.3L568.5 489.2L569.3 485.5L572.9 483.4L576.2 480.9L583.4 477.8L587.0 478.2L591.0 486.3L594.6 487.6L595.8 490.4L600.7 491.7 M575.4 500.7L575.0 494.5L589.8 494.5L587.0 494.5L587.8 498.6L588.6 505.9L588.2 510.8L591.0 514.4 M589.8 494.5L589.4 497.0L592.6 502.7L592.8 513.8 M589.8 494.5L591.8 492.7L595.8 490.4 M600.7 491.7L601.5 497.0L597.4 502.7L597.0 513.4 M600.7 491.7L602.3 484.3L603.1 484.3L608.3 482.6L614.3 486.3L621.1 486.7L624.8 487.1L629.2 484.7L636.4 485.9L640.8 483.4 M587.0 478.2L591.4 476.8L600.3 476.6L603.1 470.1L603.3 460.6 M634.3 441.8L624.0 429.0L626.0 416.2L623.6 412.1L619.5 400.8L616.3 394.6L619.5 390.7L619.5 381.3L620.7 379.0 M623.6 412.1L627.6 408.4L627.6 404.6L632.4 400.8L632.4 397.7 M634.3 441.8L643.2 445.5L646.5 444.0L682.6 459.1L682.6 457.0L686.6 457.0L686.6 405.1 M643.2 445.5L647.3 450.9L648.5 453.1L648.5 470.1L640.8 483.4L642.8 485.9L644.8 487.6L643.2 488.8L644.8 492.5L641.6 494.5L646.5 498.6L642.0 500.2L648.5 508.8L644.8 514.0L644.4 517.7L646.5 521.3L645.2 524.5L650.9 527.7L651.3 530.2L639.6 530.2L631.6 530.2L625.6 529.6 M644.8 492.5L639.2 500.2L635.6 504.3L633.6 510.4L631.2 512.4L628.4 510.8L625.2 512.8L621.5 515.5L620.3 519.9 M631.6 530.2L631.6 535.0L625.6 535.0 M639.6 530.2L644.4 533.4L642.4 540.2L644.4 546.2L643.2 548.2L637.6 546.6L632.8 548.2L632.8 551.5L634.0 553.9L630.8 554.9 M644.4 546.2L651.3 547.0L657.3 541.4L658.1 533.0L660.9 524.9L660.7 521.7L664.1 518.5L670.2 521.3L676.2 522.5L678.2 519.7L684.2 518.5 M636.4 559.1L638.4 557.5L644.0 558.5L649.7 555.1L651.3 547.0 M635.2 562.1L638.8 562.7L652.9 562.7L654.1 568.0L664.1 571.2L673.8 568.4L674.6 584.3L682.2 583.1L682.6 591.7 M633.4 609.4L640.4 610.0L660.1 610.0L672.2 612.3L680.2 611.1L672.2 612.3 M666.5 658.1L666.5 629.6L670.6 629.6L670.6 613.8L680.2 611.1 M652.3 659.0L656.1 659.5L659.3 660.4L666.5 658.1L669.4 651.1L673.4 651.1L678.2 644.6L687.8 646.1 M648.5 470.1L648.5 457.0L662.5 449.2L682.6 459.1 M646.5 498.6L649.3 499.0L660.9 506.8L662.9 502.7L668.1 502.3L673.4 496.2L678.2 494.9 M550.4 353.5L553.3 352.2L559.7 353.0L561.3 354.9L558.5 358.1L558.9 361.5L558.1 364.9L556.1 365.2L558.1 368.1L556.9 371.4L558.1 372.7L556.5 377.8 M579.0 345.4L583.4 347.8L589.0 348.4L593.0 350.0L598.9 350.4 M596.4 299.5L598.7 301.3L603.1 304.5L602.9 306.7L605.7 305.4L609.5 309.1L611.7 309.8L619.1 312.7L616.7 321.0L614.1 321.9L610.7 326.9L610.7 329.5L613.5 328.1L614.3 331.0L612.9 335.5L614.3 340.3L617.1 340.9L616.3 342.9 M599.7 297.7L603.3 297.7L606.3 297.1L609.7 299.1L610.3 301.6L611.5 304.5L610.9 307.0L611.7 309.8 M610.3 301.6L609.1 301.3L610.7 298.7L611.1 294.5L613.3 294.2L614.5 291.9L615.1 285.6 M616.7 321.0L620.5 319.8L624.8 321.3L624.6 324.2L628.2 325.1L628.2 327.2L623.6 327.8L622.4 331.2L620.1 328.9L617.7 330.8L614.3 331.0 M624.8 321.3L628.2 321.3L635.2 321.0L638.4 321.6L637.4 318.0L641.8 314.1L634.8 304.5L643.6 299.7L644.8 300.7L646.5 300.0L645.5 292.9L643.0 288.0L644.0 285.0L643.4 280.9 M628.2 325.1L635.0 324.5L636.2 326.6L641.2 327.5L640.8 330.4L641.4 332.7 M641.2 327.5L644.8 328.1L650.9 325.4L654.3 318.3L654.1 315.0L646.5 312.5L641.8 314.1 M620.9 274.0L626.0 274.7 M650.9 325.4L652.5 327.5L654.1 328.6L661.7 331.0L662.5 329.5L667.5 329.8L671.4 328.1L678.2 318.9L675.2 316.2L668.5 315.6L661.7 319.8L655.3 318.6L654.3 318.3 M644.8 300.7L651.7 302.3L654.1 303.8L657.3 304.5L661.7 309.4L665.7 311.3L666.9 311.3L676.8 311.9L675.2 316.2 M661.7 309.4L654.1 315.0 M676.8 311.9L681.0 304.5L683.0 301.0L681.0 296.8L681.2 292.9L679.4 291.6L682.2 289.0L680.6 280.6L677.8 277.8L665.7 277.1 M640.8 333.3L644.8 333.3L647.7 333.5L649.3 329.2L652.5 327.5 M654.1 328.6L661.7 331.0L662.5 337.0L664.1 337.0L663.1 340.1L664.9 342.9L660.5 349.7 M649.5 335.0L654.1 334.7L661.7 331.0L662.5 337.0L656.9 335.5L651.7 336.1L649.5 335.0L649.5 337.2L651.3 340.6L657.3 347.3L660.3 349.7 M664.1 353.5L664.1 349.7L666.7 349.7L669.0 353.5L668.3 358.6L670.6 358.9L669.2 362.9L666.7 364.9 M670.6 358.9L678.4 356.2L684.6 355.2L692.0 354.3L693.1 356.2L692.0 358.4L690.8 359.5 M676.0 351.1L678.4 356.2 M676.0 351.1L676.4 348.1L677.2 340.6L677.4 338.9L686.6 343.4L694.7 340.9L701.1 343.1 M667.5 329.8L672.6 335.0L672.2 337.2L677.4 338.9 M632.4 244.5L633.6 238.2L636.4 233.4L635.2 227.7L638.0 224.8L635.0 221.8L635.6 210.6L634.4 207.9L639.2 200.6L642.8 197.4L641.0 196.0L644.4 181.5L648.5 179.5L652.1 170.4L650.9 168.3L655.7 160.9L659.1 156.0L666.9 158.2L668.7 150.4L673.0 147.6L681.4 154.3L686.2 156.0L690.6 143.0L698.7 138.3L703.1 143.0L702.3 150.4L710.1 141.8 M668.7 150.4L681.4 163.0L680.6 167.8L682.6 174.5L683.2 184.5 M702.3 150.4L700.3 152.1L706.3 165.1L702.7 173.0L707.1 185.5L705.5 194.1L709.1 200.6L706.7 203.8L713.1 211.4L706.7 221.0L697.9 231.4 M907.6 301.3L919.6 300.0L928.9 308.8L937.1 311.9L938.9 311.6L946.5 308.2L957.0 301.3L966.2 306.0L977.1 307.9L981.1 303.2L979.9 297.1L983.5 292.9L996.7 298.1L1002.8 305.4L1009.6 303.5L1014.8 304.1L1022.4 310.4L1030.9 311.6L1039.3 309.4L1045.3 304.5L1055.0 307.3 M1055.0 307.3L1059.4 309.4L1067.4 305.7L1068.2 296.8L1071.5 289.6L1068.6 288.3L1073.1 285.0L1082.7 283.3L1090.7 286.6L1098.4 307.6L1110.8 313.4L1112.0 320.4L1118.9 320.1L1127.5 316.8L1125.1 323.1L1121.1 335.5L1115.8 334.4L1112.2 337.0L1113.6 345.1L1110.6 349.7L1111.0 351.1 M938.9 311.6L940.1 315.0L947.7 319.2L951.7 326.9L951.3 335.0L961.8 336.4L969.4 340.1L973.4 348.7L987.9 349.2L995.1 350.0L1007.6 354.6L1018.0 350.3L1029.7 348.7L1035.9 343.4L1033.7 339.8L1035.7 335.8L1042.5 337.5L1051.8 333.8L1054.6 328.6L1067.0 326.9L1067.8 320.7L1062.2 318.6L1055.0 307.3 M908.4 352.5L910.8 346.5L909.2 338.4L918.0 333.8L916.8 323.4L919.8 323.4L929.7 324.2L930.7 316.2L937.1 311.9 M908.4 352.5L901.1 356.0L895.1 358.1L887.1 360.7L882.1 366.3 M903.1 391.9L905.8 399.6L902.5 400.1L902.5 406.5L912.0 411.6L912.6 412.5L908.0 417.9L915.2 422.4L920.8 424.7L926.2 425.4L930.9 428.1L940.3 427.6L940.3 422.2L943.3 424.9L946.9 420.8L954.4 422.6L956.2 426.9L947.1 427.6L943.3 424.9 M912.6 412.5L916.0 410.9L923.2 415.8L928.0 419.2L931.7 422.2L940.3 422.2 M954.4 422.6L961.4 418.8L969.0 416.7L972.2 415.1L977.3 420.6L977.1 422.2L975.4 423.6L976.5 425.8L972.4 425.1L968.4 430.8L966.2 436.5L964.4 440.3L961.2 439.4L960.6 447.3L958.2 448.6L957.0 453.7 M958.2 448.6L957.2 443.1L952.3 441.4L952.8 439.2L956.8 435.2L947.1 433.9L947.1 427.6 M940.1 449.9L943.9 447.7L942.7 438.3L940.3 435.7L943.7 429.0 M977.3 420.6L982.7 423.6L983.1 430.8L978.1 436.3L978.1 439.8L983.5 443.1L984.7 447.7L988.3 450.7L992.5 450.3 M983.5 472.2L980.7 477.2L984.7 483.4L986.5 491.3L983.1 495.8L982.9 497.2 M992.5 450.3L990.3 456.3L988.3 455.5L980.1 457.8L977.5 463.3L983.5 472.2 M992.5 450.3L995.1 446.4L996.5 446.6L1004.0 446.0L1009.4 442.7L1014.8 444.7L1014.2 446.4L1017.4 450.1L1020.0 450.3 M996.5 446.6L999.5 449.7L999.3 451.6L1006.4 455.2L1003.6 459.9L1008.8 462.7L1014.8 469.7L1018.0 476.4L1017.8 479.3 M990.3 456.3L989.1 455.2L992.5 458.9L992.7 467.6L996.3 464.6L1001.6 463.8L1007.0 467.6L1007.0 471.8L1010.6 475.3L1010.4 480.7L1008.8 480.9L1000.0 481.1L997.3 484.0L999.5 491.3 M1017.8 479.3L1018.2 489.0L1011.2 492.3L1012.8 495.3L1008.4 494.7L1005.8 496.9 M1008.8 480.9L1012.0 482.6L1017.8 479.3 M1085.7 363.4L1089.9 360.0L1096.0 353.8L1100.6 352.7L1107.4 350.3L1111.0 351.1 M1095.2 374.7L1101.8 370.6 M988.5 513.0L991.3 513.8L992.3 516.3L996.1 514.0 M1026.7 530.8L1026.3 534.8L1030.1 535.6L1036.7 533.2L1042.5 534.0L1046.3 533.2L1049.6 527.1L1050.8 522.1L1058.4 522.3 M1152.6 549.4L1152.6 575.7 M1084.5 576.7L1088.7 576.1L1088.3 573.9L1088.1 575.7" fill="none" stroke="#c4c8cc" stroke-width=".8" stroke-linejoin="round"/><path d="M19.8 235.8L27.8 235.8L104.2 235.8L144.3 235.8L176.5 235.8L205.4 235.8 M37.9 152.1L49.9 172.4L53.9 192.2L68.0 201.5L70.0 217.5L76.8 229.3L88.1 235.8 M104.2 235.8L104.2 281.6L112.2 290.9L118.2 300.0L125.5 307.6L128.1 312.5 M144.3 235.8L144.3 312.5 M176.5 235.8L179.1 267.6L179.1 312.5 M176.5 235.8L176.5 199.7L136.3 187.4L101.3 161.9L100.1 140.7 M204.0 310.2L204.0 288.0L228.7 260.0 M266.8 296.8L266.8 321.3L268.3 325.7L275.7 330.7L280.1 333.3L287.3 335.5 M356.8 297.5L329.1 293.6L330.3 287.6L319.9 287.6L315.5 274.0L326.7 233.4 M308.8 322.2L311.4 319.2L317.3 318.9L319.5 318.3 M328.9 330.4L328.5 331.8 M87.3 352.7L104.2 352.7L116.1 352.7L140.1 352.7 M88.1 328.9L91.3 329.5L92.9 332.4L99.3 332.4L107.0 330.7L116.5 330.4 M116.1 312.5L116.1 328.1L116.6 331.0L118.4 333.3L115.4 339.5L116.1 342.9L116.1 352.7 M120.0 312.5L120.0 318.6L126.7 326.6L126.3 333.0L130.5 336.4L132.9 339.5L140.1 338.9 M140.1 336.1L168.2 336.1 M140.1 336.1L140.1 352.7L140.1 358.1L148.1 358.1 M168.2 312.5L168.2 358.1 M104.2 352.7L104.2 368.6L125.7 388.7L125.9 392.6L125.5 399.6 M128.1 352.7L128.1 378.8L128.1 382.8L125.7 388.7 M128.1 378.8L148.1 378.8L172.4 378.8L176.3 378.8L206.1 378.8 M148.1 358.1L176.3 358.1L176.3 363.4 M148.1 358.1L148.1 406.3 M172.4 378.8L172.2 403.2 M158.0 403.2L172.2 403.2 M168.2 347.3L190.5 347.3L194.9 348.1L198.8 350.0 M168.2 330.7L198.4 330.7 M176.3 363.4L203.4 363.4 M176.3 358.1L176.3 378.8 M172.4 381.3L184.5 381.3L184.5 390.9L192.5 393.1L200.6 394.3L206.6 395.3 M195.7 312.5L198.2 328.6L198.4 330.7L198.8 344.5L198.8 350.0L201.2 357.0L203.4 363.4L206.2 368.1L206.1 378.8L206.1 381.3L206.8 386.8L206.6 395.3L208.4 395.8L208.4 398.4L209.2 404.1L210.4 407.4L209.6 413.7 M198.8 344.5L219.8 344.5 M201.6 360.2L217.8 360.2L219.0 361.3 M206.1 381.3L224.1 381.3L225.9 383.8L223.3 383.8 M208.4 398.4L220.1 398.4 M216.2 326.3L215.4 329.8L213.0 332.1L213.6 337.5L219.8 344.5L220.1 348.9L224.1 353.3L220.3 357.0L219.0 361.3L223.9 369.6L226.7 377.3L228.3 378.8L225.9 383.8L223.9 388.7L220.1 398.4L219.8 407.9L225.7 407.9L226.3 411.6 M223.1 327.2L232.3 331.0L234.3 335.5 M222.1 350.0L233.5 350.0 M234.6 354.3L234.6 366.8L232.7 374.2L232.3 376.3L228.3 378.8 M245.6 354.1L245.6 368.1 M235.9 354.1L245.6 354.1L251.0 354.2 M262.8 352.7L262.8 360.0L262.2 364.9L257.8 367.5L254.4 371.4L254.4 372.7 M245.6 368.1L247.2 369.6L250.4 370.4L254.4 371.4 M232.3 376.3L236.3 374.7L238.7 374.0L241.1 372.4L245.6 368.1 M226.7 381.3L232.5 381.3L250.1 380.8L258.1 380.8L281.4 381.0 M223.9 388.7L231.9 388.7L242.3 388.7L252.4 388.7L247.6 388.7 M231.9 388.7L230.9 403.6L231.1 410.7 M242.3 388.7L244.0 399.1L244.8 407.9L244.8 409.3 M219.8 407.9L225.7 407.9 M234.3 407.9L244.8 407.9 M244.8 409.3L245.4 409.3L256.0 410.0L256.6 410.9L258.8 409.2 M252.4 388.7L255.2 387.7L260.6 388.2L261.6 389.7L266.0 389.7L270.7 394.3 M252.4 388.7L251.4 390.2L256.0 395.0L258.8 398.4L261.2 402.9 M254.4 372.7L256.8 376.0L258.1 380.8 M254.4 372.7L257.2 376.3L263.6 376.3L266.2 370.6L271.5 366.3L274.0 366.9 M262.8 364.8L281.8 364.8 M266.9 364.8L266.9 367.5L274.0 366.9L276.7 369.1L279.7 373.7 M281.8 364.8L282.1 371.4L284.7 371.4 M265.8 351.3L265.8 352.7L283.5 352.7L286.1 356.2L284.3 358.9L285.9 362.3L283.3 364.4 M286.1 356.2L289.3 358.1 M291.6 336.1L291.8 344.0L292.0 348.7L291.0 352.5L291.0 356.5L290.3 358.1 M292.0 348.7L301.0 348.1 M291.0 352.5L297.8 352.6L299.5 352.6 M297.8 352.6L297.6 356.2 M295.2 336.1L295.2 346.2L294.8 348.8 M299.0 336.1L301.0 340.1L301.1 345.4L302.2 346.8 M124.2 400.3L125.0 400.8L132.3 403.6L133.3 413.0 M127.9 421.7L133.1 421.7 M148.1 406.3L149.2 419.5L150.4 428.5L146.7 430.3 M150.4 428.5L156.4 430.8L158.4 435.2L161.6 445.3 M171.8 417.3L170.4 426.3L168.8 427.6L166.4 435.2L172.4 437.4L178.5 434.3L181.3 435.2L183.7 427.2L185.7 423.3 M344.4 594.6L346.0 585.5L339.2 583.1L339.2 574.5L333.5 571.2L317.9 578.6 M352.4 568.6L356.0 574.5L352.8 577.8L339.2 583.1 M289.7 568.4L317.9 578.6 M349.6 534.2L352.0 541.8L358.2 547.8L360.8 548.0L352.4 568.6L338.8 574.5 M360.8 548.0L365.7 546.6L377.3 543.8L385.4 546.2 M345.2 518.1L343.2 525.3L346.0 533.4L339.6 544.6L331.9 536.2L331.5 530.2 M352.4 568.6L369.3 577.3L384.5 578.6L388.6 576.5L391.8 559.9L396.2 561.5L401.4 543.8 M384.5 578.6L382.1 590.9L382.9 601.2L373.3 612.1L370.5 612.5L354.0 612.1 M391.8 559.9L397.4 568.0L402.2 580.6L400.2 592.9L384.5 591.3 M402.2 580.6L411.9 576.5L420.7 574.1L423.5 568.8L420.3 555.1L420.3 550.7 M400.2 592.9L408.2 597.1L417.5 599.6L424.7 603.3L426.7 612.5 M423.5 568.8L430.7 570.0L436.4 568.4L445.6 565.2 M420.7 574.1L431.5 575.3L434.4 578.2L440.0 581.4 M370.5 612.5L381.3 618.9L382.9 621.0L377.7 624.9L372.9 632.3L368.5 638.4 M381.3 618.9L396.2 621.0L406.6 633.6 M372.9 632.3L387.0 634.4L393.0 643.7 M370.5 648.6L379.7 648.1L391.0 647.0 M354.8 666.4L370.1 652.6L377.7 654.0L386.6 662.2 M1104.4 599.6L1104.4 673.4 M1140.5 606.2L1140.5 647.2L1152.6 647.2L1152.6 660.8L1202.8 657.2 M1104.4 647.2L1140.5 647.2 M1152.6 660.8L1152.6 684.4L1152.6 704.3 M1152.6 684.4L1160.6 689.3L1166.7 694.2L1172.7 694.2L1180.7 698.2L1188.5 701.7 M825.2 157.6L835.3 172.4L847.3 177.5L852.1 166.2L859.4 158.7 M835.3 172.4L827.2 192.2L825.2 219.3L831.2 239.8L825.2 251.4L819.2 266.2 M895.5 156.5L903.5 182.5L923.6 184.5L927.6 201.5L915.6 214.9L923.6 227.7L895.5 227.7L891.5 247.6L903.5 251.4L907.6 266.2 M923.6 94.5L931.7 127.5L935.7 145.3L923.6 184.5 M1012.0 101.4L1016.0 139.5L1028.1 133.6L1040.1 161.9L1052.2 182.5L1052.2 210.6L1028.1 223.5L1020.0 243.8L1030.1 255.2L1056.2 255.2L1064.2 251.4L1076.3 258.9L1076.3 266.2L1110.4 268.3L1137.7 276.1 M927.6 201.5L943.7 210.6L955.8 214.9L971.8 219.3L987.9 223.5L1004.0 231.8L1016.0 243.8L1020.0 243.8 M967.8 262.6L975.8 273.3L983.9 293.6L979.9 297.1 M1016.0 243.8L1008.0 258.9L995.9 266.2L983.9 251.4L971.8 255.2L967.8 262.6L943.7 266.2L935.7 276.8L939.7 290.3L943.7 296.8L939.7 306.3 M1150.6 106.9L1160.6 133.6L1176.7 139.5L1200.8 145.3L1224.9 139.5L1232.9 144.2 M1052.2 210.6L1068.2 219.3L1084.3 231.8L1108.4 243.8L1128.5 243.8L1144.6 253.0L1142.6 262.6 M907.6 266.2L899.5 280.2L895.5 287.0L881.4 280.2L871.4 269.8L863.4 266.2 M1030.1 255.2L1024.1 266.2L1032.1 283.6L1020.0 296.8L1000.0 296.8 M1076.3 266.2L1068.2 276.8L1068.2 288.3 M1110.4 268.3L1112.4 287.0L1120.5 300.0L1112.4 309.4L1112.4 320.4 M1137.7 276.1L1146.6 280.2L1150.6 296.8L1149.8 315.6L1140.5 321.6L1126.5 322.2 M973.4 348.7L975.8 363.4L987.9 368.6L995.9 376.3L1000.0 386.3L993.9 393.6L979.9 392.6L977.9 400.8L983.9 414.9L982.7 423.6 M973.4 348.7L955.8 366.0L947.7 372.2L949.7 383.8L931.7 383.8L915.6 386.3L903.5 391.6 M993.9 393.6L1006.0 398.4L1012.0 399.4L1020.0 402.2L1028.1 405.5L1028.1 414.9L1024.1 419.5L1022.0 426.3L1026.1 430.8L1034.1 435.2L1036.1 441.8 M975.8 363.4L991.9 358.1L1008.0 366.0L1014.0 373.7L1018.0 366.0L1032.1 366.0L1028.1 378.8L1030.1 388.7L1034.1 391.2L1028.1 405.5 M1032.1 366.0L1044.1 363.4L1044.1 373.7L1046.1 383.8L1052.2 391.2L1052.2 400.8L1046.1 412.5L1052.2 414.9L1062.2 414.9L1060.2 426.3L1052.2 433.0L1056.2 441.4 M1044.1 363.4L1056.2 352.7L1066.2 356.5L1067.4 363.4 M1066.2 356.5L1076.3 347.3L1082.3 330.4L1072.3 327.5L1067.0 326.9 M1076.3 347.3L1088.3 358.1L1085.7 363.4 M1082.3 330.4L1092.3 330.4L1104.4 336.1L1112.4 336.1 M1092.3 330.4L1088.3 344.5L1100.4 352.7 M1052.2 391.2L1062.2 391.2L1065.0 388.7 M1052.2 400.8L1064.2 399.4L1072.3 404.1 M1006.0 398.4L1010.0 412.5L1012.0 419.5L1008.0 424.0L1012.0 430.8L1008.0 437.4L1014.0 444.0 M983.9 414.9L995.9 421.7L1004.0 419.5L1010.0 412.5 M995.9 421.7L995.9 433.0L1004.0 437.4L1009.4 442.7 M1026.1 430.8L1028.1 441.8L1036.1 441.8L1034.1 450.5 M908.0 417.9L907.6 424.0L915.6 428.5L923.6 428.5L926.2 425.4 M923.6 428.5L923.6 437.4L919.6 439.6L921.6 446.2L923.6 450.5L915.6 457.0L913.6 465.5L911.6 466.3 M923.6 437.4L937.7 434.3L939.7 437.4 M923.6 450.5L929.7 448.4L935.7 448.4L937.7 450.5 M913.6 465.5L923.6 461.2L927.6 459.1" fill="none" stroke="#a9adb1" stroke-width=".7" stroke-dasharray="2 2.2" stroke-linejoin="round"/></svg>
<div class="ml" style="left:427px;top:105px">Greenland</div>
<div class="ml" style="left:512px;top:192px">Iceland</div>
<div class="ml" style="left:655px;top:196px">Sweden</div>
<div class="ml" style="left:614px;top:226px">Norw</div>
<div class="ml" style="left:168px;top:275px">Canada</div>
<div class="ml" style="left:178px;top:364px">United States</div>
<div class="ml" style="left:174px;top:440px">Mexico</div>
<div class="ml" style="left:320px;top:506px">Venezuela</div>
<div class="ml" style="left:280px;top:524px">Colombia</div>
<div class="ml" style="left:281px;top:584px">Peru</div>
<div class="ml" style="left:363px;top:574px">Brazil</div>
<div class="ml" style="left:327px;top:608px">Bolivia</div>
<div class="ml" style="left:304px;top:652px">Chile</div>
<div class="ml" style="left:336px;top:709px">Argentina</div>
<div class="ml" style="left:573px;top:353px">Spain</div>
<div class="ml" style="left:636px;top:344px">Italy</div>
<div class="ml" style="left:628px;top:309px">Germany</div>
<div class="ml" style="left:601px;top:331px">nce</div>
<div class="ml" style="left:664px;top:288px">oland</div>
<div class="ml" style="left:594px;top:419px">Algeria</div>
<div class="ml" style="left:658px;top:425px">Libya</div>
<div class="ml" style="left:580px;top:466px">Mali</div>
<div class="ml" style="left:627px;top:465px">Niger</div>
<div class="ml" style="left:620px;top:499px">Nigeria</div>
<div class="ml" style="left:678px;top:545px">DPC</div>
<div class="ml" style="left:654px;top:589px">Angola</div>
<div class="ml" style="left:651px;top:619px">Namibia</div>
<div class="ml" style="left:671px;top:636px">Bots</div>
<div class="ml" style="left:659px;top:682px">South Afr</div>
<div class="ml" style="left:966px;top:217px">Russia</div>
<div class="ml" style="left:1002px;top:325px">Mongolia</div>
<div class="ml" style="left:1098px;top:383px">South Korea</div>
<div class="ml" style="left:1161px;top:367px">an</div>
<div class="ml" style="left:1055px;top:556px">Indonesia</div>
<div class="ml" style="left:1128px;top:644px">Australia</div>
<div class="ml" style="left:982px;top:457px">Tha</div>
<div class="ml" style="left:911px;top:444px">dia</div>
<div class="ml" style="left:995px;top:376px">C</div>
<div class="ml" style="left:570px;top:265px;text-align:center;line-height:9.500px">United<br>Kingdom</div>
<div class="ml" style="left:1180px;top:565px;text-align:center;line-height:11px">Papua New<br>Guinea</div>
<div class="oc" style="left:422px;top:390px">North<br>Atlantic<br>Ocean</div>
<div class="oc" style="left:527px;top:660px">South<br>Atlantic<br>Ocean</div>
<div class="oc" style="left:915px;top:630px;text-align:left;transform:translate(0,-50%);left:905px">lian<br>ean</div>
<div class="mk" style="left:172.7px;top:255.3px"><svg width="28" height="30"><path d="M14.0 3.2L24.2 9.1L24.2 20.9L14.0 26.8L3.8 20.9L3.8 9.1Z" fill="#fff" stroke="#2d9bd6" stroke-width="1.700"/></svg><span>23</span></div>
<div class="mk" style="left:165.7px;top:342.3px"><svg width="28" height="30"><path d="M14.0 3.2L24.2 9.1L24.2 20.9L14.0 26.8L3.8 20.9L3.8 9.1Z" fill="#fff" stroke="#2d9bd6" stroke-width="1.700"/></svg><span>240</span></div>
<div class="mk" style="left:268.7px;top:330.3px"><svg width="28" height="30"><path d="M14.0 3.2L24.2 9.1L24.2 20.9L14.0 26.8L3.8 20.9L3.8 9.1Z" fill="#fff" stroke="#2d9bd6" stroke-width="1.700"/></svg><span>98</span></div>
<div class="mk" style="left:249.7px;top:353.3px"><svg width="28" height="30"><path d="M14.0 3.2L24.2 9.1L24.2 20.9L14.0 26.8L3.8 20.9L3.8 9.1Z" fill="#fff" stroke="#2d9bd6" stroke-width="1.700"/></svg><span>32</span></div>
<div class="mk" style="left:275.7px;top:364.3px"><svg width="28" height="30"><path d="M14.0 3.2L24.2 9.1L24.2 20.9L14.0 26.8L3.8 20.9L3.8 9.1Z" fill="#fff" stroke="#2d9bd6" stroke-width="1.700"/></svg><span>67</span></div>
<div class="mk" style="left:172.7px;top:419.3px"><svg width="28" height="30"><path d="M14.0 3.2L24.2 9.1L24.2 20.9L14.0 26.8L3.8 20.9L3.8 9.1Z" fill="#fff" stroke="#2d9bd6" stroke-width="1.700"/></svg><span>12</span></div>
<div class="mk" style="left:369.7px;top:555.3px"><svg width="28" height="30"><path d="M14.0 3.2L24.2 9.1L24.2 20.9L14.0 26.8L3.8 20.9L3.8 9.1Z" fill="#fff" stroke="#2d9bd6" stroke-width="1.700"/></svg><span>100</span></div>
<div class="mk" style="left:312.7px;top:592.3px"><svg width="28" height="30"><path d="M14.0 3.2L24.2 9.1L24.2 20.9L14.0 26.8L3.8 20.9L3.8 9.1Z" fill="#fff" stroke="#2d9bd6" stroke-width="1.700"/></svg><span>85</span></div>
<div class="mk" style="left:369.7px;top:649.3px"><svg width="28" height="30"><path d="M14.0 3.2L24.2 9.1L24.2 20.9L14.0 26.8L3.8 20.9L3.8 9.1Z" fill="#fff" stroke="#2d9bd6" stroke-width="1.700"/></svg><span>40</span></div>
<div class="mk" style="left:634.7px;top:229.3px"><svg width="28" height="30"><path d="M14.0 3.2L24.2 9.1L24.2 20.9L14.0 26.8L3.8 20.9L3.8 9.1Z" fill="#fff" stroke="#2d9bd6" stroke-width="1.700"/></svg><span>43</span></div>
<div class="mk" style="left:642.7px;top:289.3px"><svg width="28" height="30"><path d="M14.0 3.2L24.2 9.1L24.2 20.9L14.0 26.8L3.8 20.9L3.8 9.1Z" fill="#fff" stroke="#2d9bd6" stroke-width="1.700"/></svg><span>109</span></div>
<div class="mk" style="left:660.7px;top:319.3px"><svg width="28" height="30"><path d="M14.0 3.2L24.2 9.1L24.2 20.9L14.0 26.8L3.8 20.9L3.8 9.1Z" fill="#fff" stroke="#2d9bd6" stroke-width="1.700"/></svg><span>22</span></div>
<div class="mk" style="left:621.7px;top:323.3px"><svg width="28" height="30"><path d="M14.0 3.2L24.2 9.1L24.2 20.9L14.0 26.8L3.8 20.9L3.8 9.1Z" fill="#fff" stroke="#2d9bd6" stroke-width="1.700"/></svg><span>54</span></div>
<div class="mk" style="left:585.7px;top:331.3px"><svg width="28" height="30"><path d="M14.0 3.2L24.2 9.1L24.2 20.9L14.0 26.8L3.8 20.9L3.8 9.1Z" fill="#fff" stroke="#2d9bd6" stroke-width="1.700"/></svg><span>1</span></div>
<div class="mk" style="left:565.7px;top:422.3px"><svg width="28" height="30"><path d="M14.0 3.2L24.2 9.1L24.2 20.9L14.0 26.8L3.8 20.9L3.8 9.1Z" fill="#fff" stroke="#2d9bd6" stroke-width="1.700"/></svg><span>46</span></div>
<div class="mk" style="left:667.7px;top:477.3px"><svg width="28" height="30"><path d="M14.0 3.2L24.2 9.1L24.2 20.9L14.0 26.8L3.8 20.9L3.8 9.1Z" fill="#fff" stroke="#2d9bd6" stroke-width="1.700"/></svg><span>234</span></div>
<div class="mk" style="left:629.7px;top:519.3px"><svg width="28" height="30"><path d="M14.0 3.2L24.2 9.1L24.2 20.9L14.0 26.8L3.8 20.9L3.8 9.1Z" fill="#fff" stroke="#2d9bd6" stroke-width="1.700"/></svg><span>10</span></div>
<div class="mk" style="left:1007.7px;top:316.3px"><svg width="28" height="30"><path d="M14.0 3.2L24.2 9.1L24.2 20.9L14.0 26.8L3.8 20.9L3.8 9.1Z" fill="#fff" stroke="#2d9bd6" stroke-width="1.700"/></svg><span>178</span></div>
<div class="mk" style="left:1010.7px;top:376.3px"><svg width="28" height="30"><path d="M14.0 3.2L24.2 9.1L24.2 20.9L14.0 26.8L3.8 20.9L3.8 9.1Z" fill="#fff" stroke="#2d9bd6" stroke-width="1.700"/></svg><span>7</span></div>
<div class="mk" style="left:1111.7px;top:367.3px"><svg width="28" height="30"><path d="M14.0 3.2L24.2 9.1L24.2 20.9L14.0 26.8L3.8 20.9L3.8 9.1Z" fill="#fff" stroke="#2d9bd6" stroke-width="1.700"/></svg><span>22</span></div>
<div class="mk" style="left:1148.7px;top:364.3px"><svg width="28" height="30"><path d="M14.0 3.2L24.2 9.1L24.2 20.9L14.0 26.8L3.8 20.9L3.8 9.1Z" fill="#fff" stroke="#2d9bd6" stroke-width="1.700"/></svg><span>67</span></div>
<div class="mk" style="left:938.7px;top:430.3px"><svg width="28" height="30"><path d="M14.0 3.2L24.2 9.1L24.2 20.9L14.0 26.8L3.8 20.9L3.8 9.1Z" fill="#fff" stroke="#2d9bd6" stroke-width="1.700"/></svg><span>23</span></div>
<div class="mk" style="left:1000.7px;top:455.3px"><svg width="28" height="30"><path d="M14.0 3.2L24.2 9.1L24.2 20.9L14.0 26.8L3.8 20.9L3.8 9.1Z" fill="#fff" stroke="#2d9bd6" stroke-width="1.700"/></svg><span>4</span></div>
<div class="mk" style="left:1053.7px;top:522.3px"><svg width="28" height="30"><path d="M14.0 3.2L24.2 9.1L24.2 20.9L14.0 26.8L3.8 20.9L3.8 9.1Z" fill="#fff" stroke="#2d9bd6" stroke-width="1.700"/></svg><span>108</span></div>
<div class="mk" style="left:1112.7px;top:626.3px"><svg width="28" height="30"><path d="M14.0 3.2L24.2 9.1L24.2 20.9L14.0 26.8L3.8 20.9L3.8 9.1Z" fill="#fff" stroke="#2d9bd6" stroke-width="1.700"/></svg><span>34</span></div>
<div class="mk" style="left:1182.7px;top:626.3px"><svg width="28" height="30"><path d="M14.0 3.2L24.2 9.1L24.2 20.9L14.0 26.8L3.8 20.9L3.8 9.1Z" fill="#fff" stroke="#2d9bd6" stroke-width="1.700"/></svg><span>23</span></div>
<div class="mk" style="left:1158.7px;top:683.3px"><svg width="28" height="30"><path d="M14.0 3.2L24.2 9.1L24.2 20.9L14.0 26.8L3.8 20.9L3.8 9.1Z" fill="#fff" stroke="#2d9bd6" stroke-width="1.700"/></svg><span>88</span></div>
<div class="mk" style="left:606.2px;top:282.8px"><svg width="28" height="30"><path d="M14.0 2.5L24.8 8.8L24.8 21.2L14.0 27.5L3.2 21.2L3.2 8.7Z" fill="#2d9bd6" stroke="#2d9bd6" stroke-width="1.500"/></svg><span style="color:#fff;-webkit-text-stroke:.3px #fff">45</span></div>
<div class="mk" style="left:875.7px;top:429.8px"><svg width="28" height="30"><path d="M14.0 3.2L24.2 9.1L24.2 20.9L14.0 26.8L3.8 20.9L3.8 9.1Z" fill="#fff" stroke="#2d9bd6" stroke-width="1.700"/></svg><span>178</span></div>
<div class="mk" style="left:773.2px;top:609.8px"><svg width="28" height="30"><path d="M14.0 3.2L24.2 9.1L24.2 20.9L14.0 26.8L3.8 20.9L3.8 9.1Z" fill="#fff" stroke="#2d9bd6" stroke-width="1.700"/></svg><span>12</span></div>
<div class="ml" style="left:767px;top:439px">Saudi Arabia</div>
<div class="ml" style="left:733px;top:538px">Kenya</div></div>
 <div class="card" style="left:1128px;top:313px;height:268px;box-shadow:2px 3px 8px rgba(0,0,0,.35)"><div class="ct" style="top:10px">PMC 88338 AF</div><div class="abs" style="left:0;top:45px;width:226px;height:1px;background:#e3e3e3"></div><div class="abs" style="left:9px;top:57.500px;font-size:11.75px;color:#222;white-space:nowrap">Recent Locations</div><div class="abs" style="left:9px;top:73px;font-size:10.05px;color:#222;white-space:nowrap">(based on last 7 days)</div><svg class="abs" style="left:20px;top:116px" width="6" height="124"><path d="M3 0V124" stroke="#3a9fd6" stroke-width="1.500" stroke-dasharray="4.500 2.300"/></svg><div class="abs" style="left:19.500px;top:112.5px;width:7px;height:7px;border-radius:50%;background:#2d9bd6"></div><div class="abs" style="left:19.500px;top:174px;width:7px;height:7px;border-radius:50%;background:#2d9bd6"></div><div class="abs" style="left:19.500px;top:236px;width:7px;height:7px;border-radius:50%;background:#2d9bd6"></div><div class="abs" style="left:47.500px;top:95px;font-size:12.95px;color:#222;white-space:nowrap">AMS | ULD Check Point</div><div class="abs" style="left:47.500px;top:157px;font-size:12.95px;color:#222;white-space:nowrap">AMS | Cold Room</div><div class="abs" style="left:47.500px;top:218.5px;font-size:12.95px;color:#222;white-space:nowrap">AMS | Land Side</div><svg class="abs" style="left:48px;top:118px" width="14" height="14" viewBox="0 0 14 14" fill="none" stroke="#2d9bd6" stroke-width="1.300"><circle cx="7" cy="7" r="5.800"/><path d="M7 3.500V7.300L9.500 8.800"/></svg><svg class="abs" style="left:48px;top:179.5px" width="14" height="14" viewBox="0 0 14 14" fill="none" stroke="#2d9bd6" stroke-width="1.300"><circle cx="7" cy="7" r="5.800"/><path d="M7 3.500V7.300L9.500 8.800"/></svg><svg class="abs" style="left:48px;top:241px" width="14" height="14" viewBox="0 0 14 14" fill="none" stroke="#2d9bd6" stroke-width="1.300"><circle cx="7" cy="7" r="5.800"/><path d="M7 3.500V7.300L9.500 8.800"/></svg><div class="abs" style="left:69.500px;top:119.5px;font-size:10.85px;color:#222;white-space:nowrap">15.01.2025 09:10 +01:00</div><div class="abs" style="left:69.500px;top:181px;font-size:10.85px;color:#222;white-space:nowrap">15.01.2025 08:20 +01:00</div><div class="abs" style="left:69.500px;top:242.5px;font-size:10.85px;color:#222;white-space:nowrap">15.01.2025 06:40 +01:00</div></div>
<div class="card" style="left:1128px;top:589.5px;height:44px"><div class="ct" style="top:8.500px">PMC 31728 AF</div></div>
<div class="card" style="left:1128px;top:642px;height:44px"><div class="ct" style="top:8.500px">PMC 21985 AF</div></div>
<div class="card" style="left:1128px;top:695.5px;height:44px"><div class="ct" style="top:8.500px">PMC 73422 AF</div></div>
<div class="card" style="left:1128px;top:748.5px;height:44px"><div class="ct" style="top:8.500px">PMC 74258 AF</div></div>
<div class="abs" style="left:1128px;top:811px;width:113px;height:34px;border-radius:4px;background:#4f9fcc"></div>
<div class="abs" style="left:1128px;top:822px;width:113px;text-align:center;font-size:10.600px;font-weight:bold;color:#fff;letter-spacing:.2px">All Assets</div>
<div class="abs" style="left:467px;top:880.3px;width:293.3px;height:40.5px;border-radius:3px;background:#fff;box-shadow:4px 9px 14px rgba(0,0,0,.36)"></div>
<svg class="abs" style="left:467.5px;top:880.5px" width="292" height="40"><path d="M22.5 8.5L32.5 14.2L32.5 25.8L22.5 31.5L12.5 25.8L12.5 14.2Z" fill="#fff" stroke="#2d9bd6" stroke-width="1.400"/><path d="M97.0 8.5L107.0 14.2L107.0 25.8L97.0 31.5L87.0 25.8L87.0 14.2Z" fill="#fff" stroke="#2d9bd6" stroke-width="1.400"/><path d="M198.0 8.0L208.4 14.0L208.4 26.0L198.0 32.0L187.6 26.0L187.6 14.0Z" fill="#2d9bd6"/><text x="97" y="22.800" text-anchor="middle" font-size="8.6" fill="#2d9bd6" stroke="#2d9bd6" stroke-width=".25" font-family="Liberation Sans, sans-serif">85</text></svg>
<div class="abs" style="left:509.29999999999995px;top:895.2px;font-size:9.25px;color:#222;white-space:nowrap">Asset</div>
<div class="abs" style="left:582.5px;top:895.2px;font-size:9.25px;color:#222;white-space:nowrap">Asset Group</div>
<div class="abs" style="left:683.5px;top:895.2px;font-size:9.25px;color:#222;white-space:nowrap">Selected Asset</div>
<div class="abs" style="left:1546px;top:880.3px;width:113px;height:40.5px;border-radius:3px;background:#fff;box-shadow:4px 9px 14px rgba(0,0,0,.36)"></div>
<div class="abs" style="left:1546px;top:895.5px;width:113px;text-align:center;font-size:8.800px;color:#222;white-space:nowrap">Showing 805 assets</div>
</div>
</div>
</body>
</html>
